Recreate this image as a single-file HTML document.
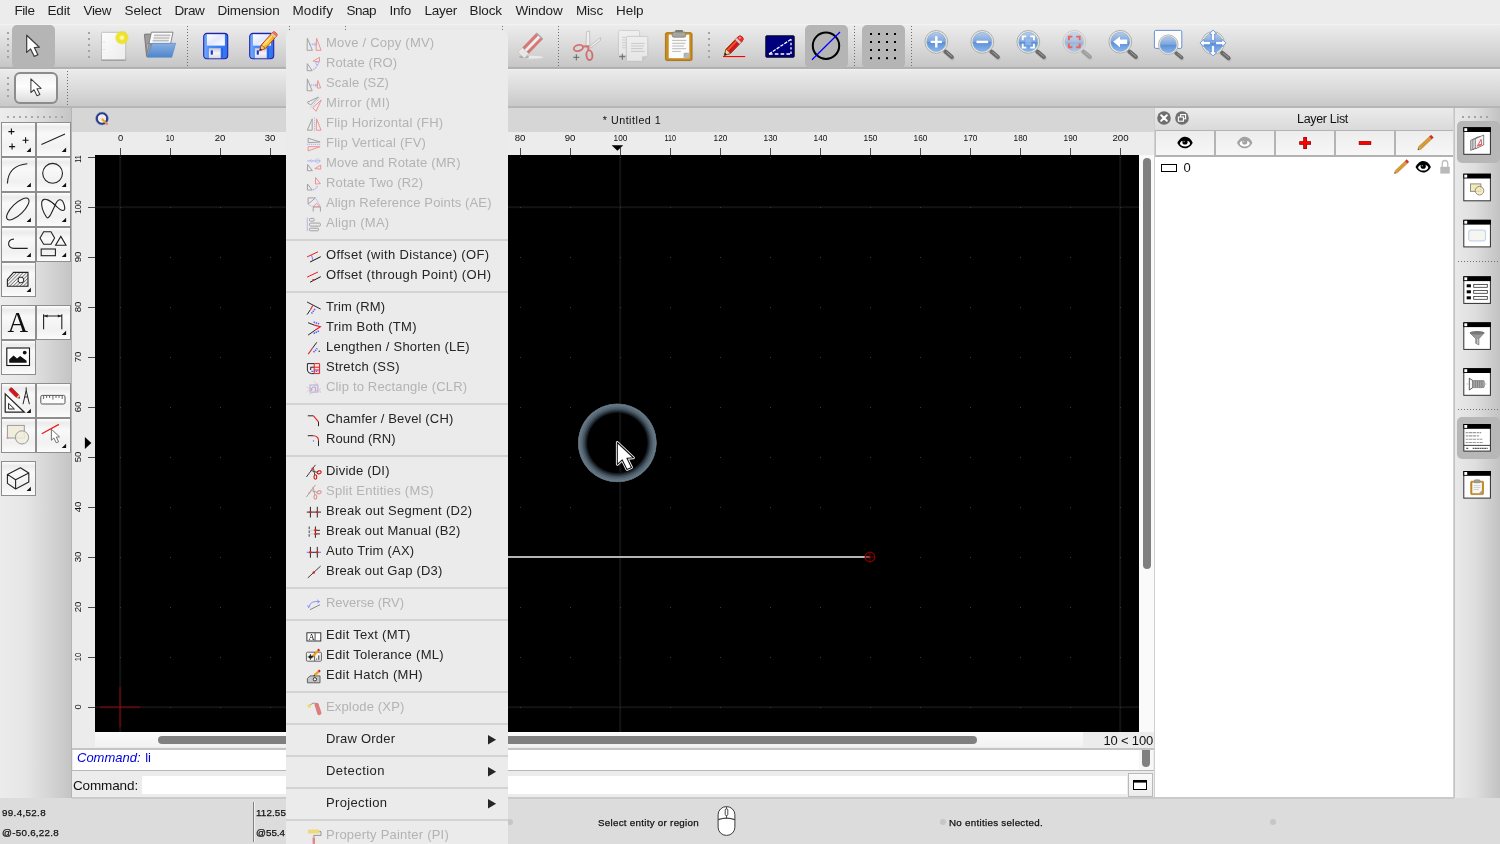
<!DOCTYPE html>
<html><head><meta charset="utf-8"><title>QCAD</title>
<style>
html,body{margin:0;padding:0}
body{width:1500px;height:844px;position:relative;overflow:hidden;background:#ececec;font-family:"Liberation Sans",sans-serif;}
#root{position:absolute;left:0;top:0;width:1500px;height:844px;overflow:hidden;will-change:transform}
.a{position:absolute;display:block}
.t{position:absolute;white-space:nowrap;font-family:"Liberation Sans",sans-serif}
</style></head><body><div id="root">
<div class="a" style="left:0px;top:0px;width:1500px;height:24px;background:#ececec"></div>
<div class="a" style="left:0px;top:24px;width:1500px;height:44.7px;background:linear-gradient(#f5f5f5 0,#ececec 1.5px,#dadada 22px,#c7c7c7 42.4px,#b1b1b1 43.4px,#b1b1b1 44.7px)"></div>
<div class="a" style="left:0px;top:68.7px;width:1500px;height:39.3px;background:linear-gradient(#f3f3f3 0,#ebebeb 1.5px,#dbdbdb 19px,#c9c9c9 36.6px,#b5b5b5 37.6px,#b5b5b5 39.3px)"></div>
<div class="t" style="left:14.50px;top:1.00px;font-size:13.5px;line-height:20px;letter-spacing:-0.438px;color:#1e1e1e;">File</div>
<div class="t" style="left:47.50px;top:1.00px;font-size:13.5px;line-height:20px;letter-spacing:-0.191px;color:#1e1e1e;">Edit</div>
<div class="t" style="left:83.50px;top:1.00px;font-size:13.5px;line-height:20px;letter-spacing:-0.380px;color:#1e1e1e;">View</div>
<div class="t" style="left:124.50px;top:1.00px;font-size:13.5px;line-height:20px;letter-spacing:-0.087px;color:#1e1e1e;">Select</div>
<div class="t" style="left:174.50px;top:1.00px;font-size:13.5px;line-height:20px;letter-spacing:-0.376px;color:#1e1e1e;">Draw</div>
<div class="t" style="left:217.50px;top:1.00px;font-size:13.5px;line-height:20px;letter-spacing:-0.198px;color:#1e1e1e;">Dimension</div>
<div class="t" style="left:292.50px;top:1.00px;font-size:13.5px;line-height:20px;letter-spacing:0.123px;color:#1e1e1e;">Modify</div>
<div class="t" style="left:346.50px;top:1.00px;font-size:13.5px;line-height:20px;letter-spacing:-0.507px;color:#1e1e1e;">Snap</div>
<div class="t" style="left:389.50px;top:1.00px;font-size:13.5px;line-height:20px;letter-spacing:-0.254px;color:#1e1e1e;">Info</div>
<div class="t" style="left:424.50px;top:1.00px;font-size:13.5px;line-height:20px;letter-spacing:-0.254px;color:#1e1e1e;">Layer</div>
<div class="t" style="left:469.50px;top:1.00px;font-size:13.5px;line-height:20px;letter-spacing:-0.103px;color:#1e1e1e;">Block</div>
<div class="t" style="left:515.50px;top:1.00px;font-size:13.5px;line-height:20px;letter-spacing:-0.169px;color:#1e1e1e;">Window</div>
<div class="t" style="left:576.00px;top:1.00px;font-size:13.5px;line-height:20px;letter-spacing:-0.186px;color:#1e1e1e;">Misc</div>
<div class="t" style="left:616.00px;top:1.00px;font-size:13.5px;line-height:20px;letter-spacing:-0.066px;color:#1e1e1e;">Help</div>
<div class="a" style="left:7px;top:32px;width:2px;height:2px;background:#a4a4a4"></div>
<div class="a" style="left:7px;top:38px;width:2px;height:2px;background:#a4a4a4"></div>
<div class="a" style="left:7px;top:44px;width:2px;height:2px;background:#a4a4a4"></div>
<div class="a" style="left:7px;top:50px;width:2px;height:2px;background:#a4a4a4"></div>
<div class="a" style="left:7px;top:56px;width:2px;height:2px;background:#a4a4a4"></div>
<div class="a" style="left:88px;top:32px;width:2px;height:2px;background:#a4a4a4"></div>
<div class="a" style="left:88px;top:38px;width:2px;height:2px;background:#a4a4a4"></div>
<div class="a" style="left:88px;top:44px;width:2px;height:2px;background:#a4a4a4"></div>
<div class="a" style="left:88px;top:50px;width:2px;height:2px;background:#a4a4a4"></div>
<div class="a" style="left:88px;top:56px;width:2px;height:2px;background:#a4a4a4"></div>
<div class="a" style="left:708px;top:32px;width:2px;height:2px;background:#a4a4a4"></div>
<div class="a" style="left:708px;top:38px;width:2px;height:2px;background:#a4a4a4"></div>
<div class="a" style="left:708px;top:44px;width:2px;height:2px;background:#a4a4a4"></div>
<div class="a" style="left:708px;top:50px;width:2px;height:2px;background:#a4a4a4"></div>
<div class="a" style="left:708px;top:56px;width:2px;height:2px;background:#a4a4a4"></div>
<div class="a" style="left:187.0px;top:26px;width:1px;height:40px;background:repeating-linear-gradient(#6e6e6e 0 1px,transparent 1px 3px)"></div>
<div class="a" style="left:289.0px;top:26px;width:1px;height:40px;background:repeating-linear-gradient(#6e6e6e 0 1px,transparent 1px 3px)"></div>
<div class="a" style="left:345.0px;top:26px;width:1px;height:40px;background:repeating-linear-gradient(#6e6e6e 0 1px,transparent 1px 3px)"></div>
<div class="a" style="left:502.0px;top:26px;width:1px;height:40px;background:repeating-linear-gradient(#6e6e6e 0 1px,transparent 1px 3px)"></div>
<div class="a" style="left:558.0px;top:26px;width:1px;height:40px;background:repeating-linear-gradient(#6e6e6e 0 1px,transparent 1px 3px)"></div>
<div class="a" style="left:854.0px;top:26px;width:1px;height:40px;background:repeating-linear-gradient(#6e6e6e 0 1px,transparent 1px 3px)"></div>
<div class="a" style="left:911.0px;top:26px;width:1px;height:40px;background:repeating-linear-gradient(#6e6e6e 0 1px,transparent 1px 3px)"></div>
<div class="a" style="left:7px;top:77px;width:2px;height:2px;background:#a4a4a4"></div>
<div class="a" style="left:7px;top:83px;width:2px;height:2px;background:#a4a4a4"></div>
<div class="a" style="left:7px;top:89px;width:2px;height:2px;background:#a4a4a4"></div>
<div class="a" style="left:7px;top:95px;width:2px;height:2px;background:#a4a4a4"></div>
<div class="a" style="left:67.0px;top:71px;width:1px;height:34px;background:repeating-linear-gradient(#6e6e6e 0 1px,transparent 1px 3px)"></div>
<div class="a" style="left:12px;top:25px;width:43px;height:43px;background:#b5b5b5;border-radius:5px"></div>
<div class="a" style="left:805px;top:25px;width:43px;height:43px;background:#b5b5b5;border-radius:5px"></div>
<div class="a" style="left:862px;top:25px;width:43px;height:43px;background:#b5b5b5;border-radius:5px"></div>
<div class="a" style="left:14px;top:72px;width:44px;height:32px;box-sizing:border-box;border:2px solid #8c8c8c;border-radius:6px;background:linear-gradient(#f2f2f2,#fdfdfd 45%,#f4f4f4 60%,#dcdcdc)"></div>
<svg class="a" style="left:0;top:0" width="1500" height="110" viewBox="0 0 1500 110"><defs>
<linearGradient id="lens" x1="0" y1="0" x2="0" y2="1"><stop offset="0" stop-color="#b4cbea"/><stop offset="0.48" stop-color="#7da6de"/><stop offset="0.52" stop-color="#5b8fd6"/><stop offset="1" stop-color="#86b6f2"/></linearGradient>
<linearGradient id="page" x1="0" y1="0" x2="1" y2="1"><stop offset="0" stop-color="#fdfdfd"/><stop offset="1" stop-color="#ececec"/></linearGradient>
<radialGradient id="glow"><stop offset="0" stop-color="#ffffff"/><stop offset="0.22" stop-color="#fbf58a"/><stop offset="0.45" stop-color="#efe41e"/><stop offset="0.8" stop-color="#ece02a" stop-opacity="0.85"/><stop offset="1" stop-color="#ece02a" stop-opacity="0"/></radialGradient>
<linearGradient id="flop" x1="0" y1="0" x2="1" y2="0"><stop offset="0" stop-color="#78aefc"/><stop offset="0.25" stop-color="#4a8cf8"/><stop offset="1" stop-color="#2f72f0"/></linearGradient>
<linearGradient id="lab" x1="0" y1="0" x2="1" y2="1"><stop offset="0" stop-color="#ffffff"/><stop offset="0.5" stop-color="#e4e8fc"/><stop offset="1" stop-color="#ffffff"/></linearGradient>
<linearGradient id="shut" x1="0" y1="0" x2="0" y2="1"><stop offset="0" stop-color="#c8c8d8"/><stop offset="0.5" stop-color="#f4f4f8"/><stop offset="1" stop-color="#d8d8e0"/></linearGradient>
<linearGradient id="fold" x1="0" y1="0" x2="0" y2="1"><stop offset="0" stop-color="#8ab0e0"/><stop offset="1" stop-color="#4f86cc"/></linearGradient>
<linearGradient id="pen" x1="0" y1="0" x2="1" y2="0"><stop offset="0" stop-color="#e8861a"/><stop offset="0.45" stop-color="#ffd040"/><stop offset="1" stop-color="#f08c10"/></linearGradient>
<g id="mag"><path d="M7.2 8.2L15.6 15.4" stroke="#a8a8a8" stroke-width="4.6" stroke-linecap="round" opacity="0.35" transform="translate(0.6,1.2)"/><path d="M9.2 9.8L15.5 15.1" stroke="#6a6a6a" stroke-width="4.2" stroke-linecap="round"/><path d="M10.4 10.2L15.6 14.6" stroke="#a2a2a2" stroke-width="0.9" stroke-linecap="round"/><circle cx="0" cy="0" r="11.4" fill="#ecece6" stroke="#a6a6a0" stroke-width="0.9"/><circle cx="0" cy="0" r="9.6" fill="url(#lens)" stroke="#8fa6c8" stroke-width="0.6"/></g>
<g id="floppy"><rect x="0.6" y="0.5" width="24" height="25.3" rx="3.2" fill="url(#flop)" stroke="#2222a6" stroke-width="1.1"/><rect x="3.8" y="1.4" width="18" height="11.3" fill="url(#lab)"/><rect x="5.8" y="15.3" width="11.8" height="10" fill="url(#shut)"/><rect x="7.6" y="17.4" width="2.2" height="4.4" rx="0.6" fill="#1a3cd0"/><rect x="18.3" y="15" width="1.6" height="10.4" fill="#1f5ae8" opacity="0.8"/></g>
<path id="arrowc" d="M0 0V17.2L3.9 13.7L7.6 21.2L11.2 19.6L7.6 12.4L12.7 12Z"/>
</defs><use href="#arrowc" x="26.7" y="35.2" fill="#fff" stroke="#3c3c3c" stroke-width="1.2" stroke-linejoin="round"/><g transform="translate(30.9,78.8) scale(0.8)"><use href="#arrowc" fill="#fff" stroke="#3c3c3c" stroke-width="1.3" stroke-linejoin="round"/></g><rect x="101" y="56" width="25.2" height="5" rx="1.6" fill="#7e7e7e" opacity="0.6"/><rect x="101.5" y="32.3" width="24.2" height="27.4" rx="1" fill="url(#page)" stroke="#b4b4b4" stroke-width="0.8"/><rect x="103.4" y="41.6" width="1.2" height="0.8" fill="#c4c4c4"/><rect x="103.4" y="49" width="1.2" height="0.8" fill="#c4c4c4"/><circle cx="121.9" cy="37.7" r="7.2" fill="url(#glow)"/><path d="M144.4 34.6Q144.4 34.1 145 34.1H151.6L151 56.4L146.6 56.4Z" fill="#9c9c9c" stroke="#6a6a6a" stroke-width="0.8"/><path d="M151.4 32.2H173L170.6 43.6H147.2L146.6 55Z" fill="#fcfcfc" stroke="#7c7c7c" stroke-width="0.9"/><path d="M154 35.4H170.4M153.4 38H169.6M152.6 40.6H168.8" stroke="#bcbcbc" stroke-width="1.7"/><path d="M152.2 43.3H175.6L171.8 57.2H147.2Z" fill="url(#fold)" stroke="#5a8acc" stroke-width="0.7"/><use href="#floppy" x="203.1" y="32.9"/><use href="#floppy" x="249.1" y="32.9"/><g transform="translate(259.7,50.7) rotate(-47.8)"><path d="M0 0L5.4 -2.7H22.4Q24.2 -2.7 24.2 0Q24.2 2.7 22.4 2.7H5.4Z" fill="url(#pen)" stroke="#b8400c" stroke-width="0.9" stroke-linejoin="round"/><path d="M5.4 -0.9H19.6" stroke="#fff2a0" stroke-width="1.2" opacity="0.9"/><path d="M0 0L5.4 -2.7V2.7Z" fill="#f2c890" stroke="#b8400c" stroke-width="0.7"/><path d="M0 0L2.2 -1.1V1.1Z" fill="#2a2a2a"/><rect x="19.8" y="-2.7" width="1.8" height="5.4" fill="#cfcfcf"/><path d="M21.6 -2.7H22.6Q24.2 -2.7 24.2 0Q24.2 2.7 22.6 2.7H21.6Z" fill="#e87860"/></g><g opacity="0.62"><ellipse cx="531" cy="57.3" rx="12.4" ry="1.5" fill="#fafafa"/><ellipse cx="524" cy="57" rx="5" ry="1.4" fill="#9a9a9a"/><g transform="translate(530.6,45.4) rotate(-46)"><rect x="-13.6" y="-4.5" width="27.2" height="9" rx="0.8" fill="#d23c3c"/><rect x="-13.6" y="-1.4" width="27.2" height="2.9" fill="#f8f8f8"/><rect x="-13.6" y="-4.5" width="6.2" height="9" fill="#f4f4f4" stroke="#bdbdbd" stroke-width="0.5"/><rect x="12.2" y="-4.5" width="1.4" height="9" fill="#8e8e8e"/></g></g><g opacity="0.62"><path d="M586.6 31.6L589.6 31L589.8 46.6L586 45.4Z" fill="#f8f8f8" stroke="#9a9a9a" stroke-width="0.7"/><path d="M590 46L600.6 37.6L600.4 40.6L590.4 48.2Z" fill="#f8f8f8" stroke="#9a9a9a" stroke-width="0.7"/><ellipse cx="578.4" cy="48" rx="4.7" ry="2.9" fill="none" stroke="#d03434" stroke-width="1.9" transform="rotate(-14 578.4 48)"/><ellipse cx="589.4" cy="55.2" rx="3" ry="4.8" fill="none" stroke="#d03434" stroke-width="1.9" transform="rotate(-6 589.4 55.2)"/><path d="M582.8 46.6L588.2 46.4L588.4 50.6" stroke="#d03434" stroke-width="2" fill="none"/><path d="M573.2 57.3H579.4M576.3 54.2V60.4" stroke="#222" stroke-width="1"/></g><g opacity="0.6"><rect x="618.4" y="30.4" width="21.2" height="25" rx="1.2" fill="#f4f4f4" stroke="#b4b4b4" stroke-width="0.8"/><path d="M622 37.4H626M622 40H626M622 42.6H626M622 45.2H626M622 47.8H626" stroke="#bdbdbd" stroke-width="0.9"/><path d="M627.4 36.4H646.8Q647.8 36.4 647.8 37.4V56.2L642 61.4H627.4Q626.4 61.4 626.4 60.4V37.4Q626.4 36.4 627.4 36.4Z" fill="#f7f7f7" stroke="#b0b0b0" stroke-width="0.8"/><path d="M647.8 56.2L642 61.4V57.2Q642 56.2 643 56.2Z" fill="#c4c4c4"/><path d="M631 43.4H644.6M631 46H644M631 48.6H642.6M631 51.4H644.6" stroke="#b8b8b8" stroke-width="0.9"/><path d="M619.2 56.7H625.4M622.3 53.6V59.8" stroke="#222" stroke-width="1"/></g><rect x="665.2" y="33" width="27.4" height="28.2" rx="1.8" fill="#8a8a8a" opacity="0.4"/><rect x="665.4" y="32.6" width="26.6" height="27.8" rx="1.6" fill="#c98a1e" stroke="#a56c10" stroke-width="0.8"/><rect x="668.7" y="34.6" width="20.6" height="23.6" fill="#fbfbfb"/><path d="M689.3 58.2H683.6L689.3 52.8Z" fill="#b4b4b4"/><path d="M683.6 58.2V54Q683.6 52.8 684.8 52.8H689.3Z" fill="#8e8e8e" opacity="0.7"/><path d="M672.2 40.4H686.2M672.2 43.3H685.4M672.2 46H684M672.2 48.7H686.2M672.2 51.4H680.8" stroke="#bababa" stroke-width="1"/><rect x="675.2" y="30" width="7.8" height="3.6" rx="0.8" fill="#7e7e76"/><rect x="672.2" y="32" width="13.6" height="5.2" rx="1.6" fill="#a6a69a" stroke="#76766c" stroke-width="0.7"/><rect x="723" y="56" width="22.2" height="1.1" fill="#ff0000"/><g transform="translate(724.3,55.4) rotate(-46)"><path d="M0 0L5.8 -3.1H22.6Q25.8 -3.1 25.8 0Q25.8 3.1 22.6 3.1H5.8Z" fill="#d81424" stroke="#7c4a12" stroke-width="0.9" stroke-linejoin="round"/><path d="M5.8 -1.2H18.6" stroke="#f0602a" stroke-width="1.5"/><path d="M0 0L5.8 -3.1V3.1Z" fill="#f4cfa4" stroke="#7c4a12" stroke-width="0.7"/><path d="M0 0L2.4 -1.25V1.25Z" fill="#161616"/><rect x="18.8" y="-3.1" width="2.6" height="6.2" fill="#cfcfcf"/><path d="M21.4 -3.1H22.6Q25.8 -3.1 25.8 0Q25.8 3.1 22.6 3.1H21.4Z" fill="#f02a2a"/><circle cx="23.4" cy="-1" r="1.1" fill="#ff8a8a"/></g><rect x="765.8" y="35.8" width="28.4" height="21.4" rx="0.8" fill="#00007e" stroke="#0a0a1e" stroke-width="1"/><path d="M769 54L791 39.3" stroke="#fff" stroke-width="1.3" stroke-dasharray="3.4 1.2"/><path d="M769 54H791" stroke="#fff" stroke-width="1.3" stroke-dasharray="3.6 2.2"/><path d="M791 54V39.3" stroke="#fff" stroke-width="1.3" stroke-dasharray="2.4 2"/><circle cx="826" cy="45.7" r="13.2" fill="none" stroke="#000" stroke-width="2"/><path d="M812 59.8L840 32" stroke="#0000ff" stroke-width="1.2"/><rect x="870" y="33" width="2" height="2" fill="#000"/><rect x="870" y="41" width="2" height="2" fill="#000"/><rect x="870" y="49" width="2" height="2" fill="#000"/><rect x="870" y="57.2" width="2" height="2" fill="#000"/><rect x="878" y="33" width="2" height="2" fill="#000"/><rect x="878" y="41" width="2" height="2" fill="#000"/><rect x="878" y="49" width="2" height="2" fill="#000"/><rect x="878" y="57.2" width="2" height="2" fill="#000"/><rect x="886" y="33" width="2" height="2" fill="#000"/><rect x="886" y="41" width="2" height="2" fill="#000"/><rect x="886" y="49" width="2" height="2" fill="#000"/><rect x="886" y="57.2" width="2" height="2" fill="#000"/><rect x="894" y="33" width="2" height="2" fill="#000"/><rect x="894" y="41" width="2" height="2" fill="#000"/><rect x="894" y="49" width="2" height="2" fill="#000"/><rect x="894" y="57.2" width="2" height="2" fill="#000"/><use href="#mag" x="936.3" y="41.9"/><path d="M930.7 41.9H941.9M936.3 36.3V47.5" stroke="#fff" stroke-width="2.4"/><use href="#mag" x="982.3" y="41.9"/><path d="M976.5 41.9H988.1" stroke="#fff" stroke-width="2.4"/><use href="#mag" x="1028.3" y="41.9"/><path d="M1022.7 40.2V36.4H1026.3M1030.3 36.4H1033.9V40.2M1033.9 43.8V47.6H1030.3M1026.3 47.6H1022.7V43.8" fill="none" stroke="#fff" stroke-width="1.9"/><rect x="1025.3" y="39" width="6" height="6" fill="#9dbcec" opacity="0.7"/><g opacity="0.5"><use href="#mag" x="1074.3" y="41.8"/></g><path d="M1068.9 40.2V36.6H1072.4M1076.2 36.6H1079.7V40.2M1079.7 43.6V47.2H1076.2M1072.4 47.2H1068.9V43.6" fill="none" stroke="#ea6262" stroke-width="1.9"/><use href="#mag" x="1120.3" y="41.8"/><path d="M1113.2 41.8L1120 36.4V39.6H1127.2V44H1120V47.2Z" fill="#fff"/><rect x="1154.4" y="30.4" width="27.4" height="18" rx="1.4" fill="#fdfdfd" stroke="#5b84cc" stroke-width="0.9"/><g transform="translate(1168.3,44.7) scale(0.86)"><use href="#mag"/></g><g transform="translate(1213,43)"><use href="#mag"/><g transform="rotate(0)"><path d="M-1.65 -2.6V-9H-3.6L0 -13.1L3.6 -9H1.65V-2.6Z" fill="#fff" stroke="#4a80d4" stroke-width="0.7" stroke-linejoin="round"/></g><g transform="rotate(90)"><path d="M-1.65 -2.6V-9H-3.6L0 -13.1L3.6 -9H1.65V-2.6Z" fill="#fff" stroke="#4a80d4" stroke-width="0.7" stroke-linejoin="round"/></g><g transform="rotate(180)"><path d="M-1.65 -2.6V-9H-3.6L0 -13.1L3.6 -9H1.65V-2.6Z" fill="#fff" stroke="#4a80d4" stroke-width="0.7" stroke-linejoin="round"/></g><g transform="rotate(270)"><path d="M-1.65 -2.6V-9H-3.6L0 -13.1L3.6 -9H1.65V-2.6Z" fill="#fff" stroke="#4a80d4" stroke-width="0.7" stroke-linejoin="round"/></g></g></svg>
<div class="a" style="left:0px;top:108px;width:72px;height:690px;background:linear-gradient(90deg,#ececec,#e6e6e6 35%,#c4c4c4)"></div>
<div class="a" style="left:71px;top:108px;width:1px;height:690px;background:#b4b4b4"></div>
<div class="a" style="left:7px;top:116px;width:2px;height:2px;background:#a8a8a8"></div>
<div class="a" style="left:13px;top:116px;width:2px;height:2px;background:#a8a8a8"></div>
<div class="a" style="left:19px;top:116px;width:2px;height:2px;background:#a8a8a8"></div>
<div class="a" style="left:25px;top:116px;width:2px;height:2px;background:#a8a8a8"></div>
<div class="a" style="left:31px;top:116px;width:2px;height:2px;background:#a8a8a8"></div>
<div class="a" style="left:37px;top:116px;width:2px;height:2px;background:#a8a8a8"></div>
<div class="a" style="left:43px;top:116px;width:2px;height:2px;background:#a8a8a8"></div>
<div class="a" style="left:49px;top:116px;width:2px;height:2px;background:#a8a8a8"></div>
<div class="a" style="left:55px;top:116px;width:2px;height:2px;background:#a8a8a8"></div>
<div class="a" style="left:61px;top:116px;width:2px;height:2px;background:#a8a8a8"></div>
<div class="a" style="left:1px;top:122px;width:35px;height:35px;box-sizing:border-box;border:1px solid #8e8e8e;background:linear-gradient(#fdfdfd 0,#ebebeb 12%,#f9f9f9 32%,#f1f1f1 72%,#fbfbfb 100%)"></div>
<div class="a" style="left:36px;top:122px;width:35px;height:35px;box-sizing:border-box;border:1px solid #8e8e8e;background:linear-gradient(#fdfdfd 0,#ebebeb 12%,#f9f9f9 32%,#f1f1f1 72%,#fbfbfb 100%)"></div>
<div class="a" style="left:1px;top:157px;width:35px;height:35px;box-sizing:border-box;border:1px solid #8e8e8e;background:linear-gradient(#fdfdfd 0,#ebebeb 12%,#f9f9f9 32%,#f1f1f1 72%,#fbfbfb 100%)"></div>
<div class="a" style="left:36px;top:157px;width:35px;height:35px;box-sizing:border-box;border:1px solid #8e8e8e;background:linear-gradient(#fdfdfd 0,#ebebeb 12%,#f9f9f9 32%,#f1f1f1 72%,#fbfbfb 100%)"></div>
<div class="a" style="left:1px;top:192px;width:35px;height:35px;box-sizing:border-box;border:1px solid #8e8e8e;background:linear-gradient(#fdfdfd 0,#ebebeb 12%,#f9f9f9 32%,#f1f1f1 72%,#fbfbfb 100%)"></div>
<div class="a" style="left:36px;top:192px;width:35px;height:35px;box-sizing:border-box;border:1px solid #8e8e8e;background:linear-gradient(#fdfdfd 0,#ebebeb 12%,#f9f9f9 32%,#f1f1f1 72%,#fbfbfb 100%)"></div>
<div class="a" style="left:1px;top:227px;width:35px;height:35px;box-sizing:border-box;border:1px solid #8e8e8e;background:linear-gradient(#fdfdfd 0,#ebebeb 12%,#f9f9f9 32%,#f1f1f1 72%,#fbfbfb 100%)"></div>
<div class="a" style="left:36px;top:227px;width:35px;height:35px;box-sizing:border-box;border:1px solid #8e8e8e;background:linear-gradient(#fdfdfd 0,#ebebeb 12%,#f9f9f9 32%,#f1f1f1 72%,#fbfbfb 100%)"></div>
<div class="a" style="left:1px;top:262px;width:35px;height:35px;box-sizing:border-box;border:1px solid #8e8e8e;background:linear-gradient(#fdfdfd 0,#ebebeb 12%,#f9f9f9 32%,#f1f1f1 72%,#fbfbfb 100%)"></div>
<div class="a" style="left:1px;top:305px;width:35px;height:35px;box-sizing:border-box;border:1px solid #8e8e8e;background:linear-gradient(#fdfdfd 0,#ebebeb 12%,#f9f9f9 32%,#f1f1f1 72%,#fbfbfb 100%)"></div>
<div class="a" style="left:36px;top:305px;width:35px;height:35px;box-sizing:border-box;border:1px solid #8e8e8e;background:linear-gradient(#fdfdfd 0,#ebebeb 12%,#f9f9f9 32%,#f1f1f1 72%,#fbfbfb 100%)"></div>
<div class="a" style="left:1px;top:340px;width:35px;height:35px;box-sizing:border-box;border:1px solid #8e8e8e;background:linear-gradient(#fdfdfd 0,#ebebeb 12%,#f9f9f9 32%,#f1f1f1 72%,#fbfbfb 100%)"></div>
<div class="a" style="left:1px;top:383px;width:35px;height:35px;box-sizing:border-box;border:1px solid #8e8e8e;background:linear-gradient(#fdfdfd 0,#ebebeb 12%,#f9f9f9 32%,#f1f1f1 72%,#fbfbfb 100%)"></div>
<div class="a" style="left:36px;top:383px;width:35px;height:35px;box-sizing:border-box;border:1px solid #8e8e8e;background:linear-gradient(#fdfdfd 0,#ebebeb 12%,#f9f9f9 32%,#f1f1f1 72%,#fbfbfb 100%)"></div>
<div class="a" style="left:1px;top:418px;width:35px;height:35px;box-sizing:border-box;border:1px solid #8e8e8e;background:linear-gradient(#fdfdfd 0,#ebebeb 12%,#f9f9f9 32%,#f1f1f1 72%,#fbfbfb 100%)"></div>
<div class="a" style="left:36px;top:418px;width:35px;height:35px;box-sizing:border-box;border:1px solid #8e8e8e;background:linear-gradient(#fdfdfd 0,#ebebeb 12%,#f9f9f9 32%,#f1f1f1 72%,#fbfbfb 100%)"></div>
<div class="a" style="left:1px;top:461px;width:35px;height:35px;box-sizing:border-box;border:1px solid #8e8e8e;background:linear-gradient(#fdfdfd 0,#ebebeb 12%,#f9f9f9 32%,#f1f1f1 72%,#fbfbfb 100%)"></div>
<svg class="a" style="left:0;top:108px" width="72" height="400" viewBox="0 108 72 400"><defs><pattern id="hat" width="2.4" height="2.4" patternUnits="userSpaceOnUse" patternTransform="rotate(-45)"><rect width="2.4" height="2.4" fill="#f2f2f2"/><rect width="2.4" height="0.7" fill="#666"/></pattern></defs><path d="M8.4 131.6H14.4M11.4 128.6V134.6" stroke="#111" stroke-width="1.1" fill="none"/><path d="M22.6 140.3H28.6M25.6 137.3V143.3" stroke="#111" stroke-width="1.1" fill="none"/><path d="M9.1 146.6H15.1M12.1 143.6V149.6" stroke="#111" stroke-width="1.1" fill="none"/><path d="M30.9 147.49999999999997V151.89999999999998H26.5Z" fill="#111"/><path d="M41.5 144.5L65 134.1" stroke="#222" stroke-width="1.1"/><path d="M66.10000000000001 147.49999999999997V151.89999999999998H61.70000000000001Z" fill="#111"/><path d="M7.4 183.4Q8.2 165.4 27.3 163.7" fill="none" stroke="#222" stroke-width="1.1"/><path d="M30.9 182.7V187.1H26.5Z" fill="#111"/><circle cx="52.6" cy="173.3" r="9.9" fill="none" stroke="#222" stroke-width="1.1"/><path d="M66.10000000000001 182.7V187.1H61.70000000000001Z" fill="#111"/><ellipse cx="17.8" cy="209" rx="14.6" ry="5.6" fill="none" stroke="#222" stroke-width="1.1" transform="rotate(-44 17.8 209)"/><path d="M30.9 217.7V222.1H26.5Z" fill="#111"/><path d="M41.8 201.6C44 196.4 50.6 200.6 56.4 206.4C62 211.8 66 212 64.4 205.6C62.6 198.6 58.6 197.4 55.4 204.4C52 211.8 48.8 220.6 46.4 217C43.8 213 41 206.4 41.8 201.6Z" fill="none" stroke="#222" stroke-width="1.1"/><path d="M66.10000000000001 217.7V222.1H61.70000000000001Z" fill="#111"/><path d="M13.9 239.1C6.8 238.9 6.8 248.5 13.9 248.4H27.7" fill="none" stroke="#222" stroke-width="1.1"/><path d="M30.9 252.69999999999996V257.09999999999997H26.5Z" fill="#111"/><path d="M40 238L43.65 231.7H50.95L54.6 238L50.95 244.3H43.65Z" fill="none" stroke="#222" stroke-width="1.1"/><path d="M60.8 236.4L66 245.2H55.6Z" fill="none" stroke="#222" stroke-width="1.1"/><rect x="41.2" y="249" width="14.2" height="6.7" fill="none" stroke="#222" stroke-width="1.1"/><path d="M66.10000000000001 252.69999999999996V257.09999999999997H61.70000000000001Z" fill="#111"/><path d="M7.4 286.2V279.5L13.5 272.4H28V286.2Z" fill="url(#hat)" stroke="#222" stroke-width="1.1"/><circle cx="20.9" cy="280" r="2.9" fill="#f6f6f6" stroke="#222" stroke-width="1"/><path d="M30.9 287.7V292.09999999999997H26.5Z" fill="#111"/><text x="17.9" y="332.3" text-anchor="middle" font-family="Liberation Serif,serif" font-size="28.5" fill="#111">A</text><path d="M43.6 314.3V329.2M61.8 314.3V329.2M43.6 316H61.8" stroke="#222" stroke-width="1.1" fill="none"/><path d="M43.9 316L47.6 314.6V317.4ZM61.5 316L57.8 314.6V317.4Z" fill="#222"/><path d="M66.10000000000001 330.7V335.09999999999997H61.70000000000001Z" fill="#111"/><rect x="6.8" y="348" width="22.7" height="17.5" fill="#fff" stroke="#111" stroke-width="1.1"/><path d="M9.2 362.8V359.6L13.6 355.4L17 358.6L20.2 356L26.6 360.8V362.8Z" fill="#111"/><circle cx="24.7" cy="352.6" r="1.9" fill="#111"/><path d="M5.2 393.9V412.2H24.3Z" fill="#fafafa" stroke="#222" stroke-width="1.2"/><path d="M8.6 403.4V409H14.4Z" fill="none" stroke="#222" stroke-width="1"/><g transform="translate(19.6,398.2) rotate(-135)"><path d="M0 0L3 -1.9H12.4Q13.8 -1.9 13.8 0Q13.8 1.9 12.4 1.9H3Z" fill="#d81424" stroke="#7c3a12" stroke-width="0.6"/><path d="M0 0L3 -1.9V1.9Z" fill="#f0c8a0"/><path d="M0 0L1.2 -0.8V0.8Z" fill="#111"/></g><path d="M26.2 387.4V390.4M26.2 390.4L23 404.2M26.2 390.4L29.4 404.2M24.6 397H27.8" stroke="#222" stroke-width="1" fill="none"/><path d="M30.9 408.7V413.09999999999997H26.5Z" fill="#111"/><rect x="40.8" y="395.4" width="24.2" height="8.6" rx="1.4" fill="#fbfbfb" stroke="#555" stroke-width="1"/><path d="M43.6 396V399M46.6 396V398M49.6 396V398M52.9 396V399.6M56 396V398M59 396V398M62.2 396V399" stroke="#444" stroke-width="0.8"/><rect x="7.4" y="425.4" width="16.9" height="12.6" fill="#f0eddc" stroke="#9a9a9a" stroke-width="1"/><circle cx="22" cy="437.4" r="6.6" fill="#f0eddc" fill-opacity="0.85" stroke="#9a9a9a" stroke-width="1"/><circle cx="7.6" cy="438" r="1.1" fill="#f08a8a"/><path d="M41.8 433.8L58.9 424.4" stroke="#f01818" stroke-width="1.2"/><g transform="translate(51.4,429.2) scale(0.64)"><path d="M0 0V17.2L3.9 13.7L7.6 21.2L11.2 19.6L7.6 12.4L12.7 12Z" fill="#fff" stroke="#555" stroke-width="1.3" stroke-linejoin="round"/></g><path d="M66.10000000000001 443.7V448.09999999999997H61.70000000000001Z" fill="#111"/><path d="M7.4 474.4L20.4 467.7L28.8 473L15.6 479.8ZM7.4 474.4V483.4L15.6 489V479.8M15.6 489L28.8 482V473" fill="none" stroke="#222" stroke-width="1.1" stroke-linejoin="round"/><path d="M30.9 486.7V491.09999999999997H26.5Z" fill="#111"/></svg>
<div class="a" style="left:72px;top:108px;width:1082px;height:24px;background:#d6d6d6"></div>
<div class="t" style="left:602.80px;top:110.20px;font-size:10.7px;line-height:20px;letter-spacing:0.513px;color:#111;">* Untitled 1</div>
<svg class="a" style="left:94px;top:111px;" width="16" height="16" viewBox="0 0 16 16"><circle cx="8" cy="7.5" r="5.3" fill="#f4f4f4" stroke="#2a3c88" stroke-width="2.2"/><circle cx="8" cy="7.5" r="6.5" fill="none" stroke="#8a9ac8" stroke-width="0.5"/><path d="M4 7.8H12M8 3.8V11.8" stroke="#e8b0b0" stroke-width="0.5"/><path d="M7.6 7.6L12.6 12.6" stroke="#f0a020" stroke-width="2"/><path d="M12.2 12.2L13.6 13.6" stroke="#e87878" stroke-width="2"/><path d="M7.2 7.2L8.2 8.2" stroke="#fff0a0" stroke-width="1.4"/></svg>
<div class="a" style="left:72px;top:132px;width:1082px;height:23px;background:#ececec"></div>
<div class="a" style="left:72px;top:155px;width:23px;height:577px;background:#ececec"></div>
<div class="a" style="left:95px;top:155px;width:1044px;height:577px;background:#000"></div>
<div class="a" style="left:119.9px;top:148px;width:1.2px;height:7px;background:#4a4a4a"></div>
<div class="t" style="left:117.90px;top:128.00px;width:5.01px;font-size:9px;line-height:20px;color:#111;transform:scaleX(1.039);transform-origin:50% 50%">0</div>
<div class="a" style="left:169.9px;top:148px;width:1.2px;height:7px;background:#4a4a4a"></div>
<div class="t" style="left:165.39px;top:128.00px;width:10.01px;font-size:9px;line-height:20px;color:#111;transform:scaleX(0.829);transform-origin:50% 50%">10</div>
<div class="a" style="left:219.9px;top:148px;width:1.2px;height:7px;background:#4a4a4a"></div>
<div class="t" style="left:215.39px;top:128.00px;width:10.01px;font-size:9px;line-height:20px;color:#111;transform:scaleX(1.069);transform-origin:50% 50%">20</div>
<div class="a" style="left:269.9px;top:148px;width:1.2px;height:7px;background:#4a4a4a"></div>
<div class="t" style="left:265.39px;top:128.00px;width:10.01px;font-size:9px;line-height:20px;color:#111;transform:scaleX(1.069);transform-origin:50% 50%">30</div>
<div class="a" style="left:319.9px;top:148px;width:1.2px;height:7px;background:#4a4a4a"></div>
<div class="t" style="left:315.39px;top:128.00px;width:10.01px;font-size:9px;line-height:20px;color:#111;transform:scaleX(1.069);transform-origin:50% 50%">40</div>
<div class="a" style="left:369.9px;top:148px;width:1.2px;height:7px;background:#4a4a4a"></div>
<div class="t" style="left:365.39px;top:128.00px;width:10.01px;font-size:9px;line-height:20px;color:#111;transform:scaleX(1.069);transform-origin:50% 50%">50</div>
<div class="a" style="left:419.9px;top:148px;width:1.2px;height:7px;background:#4a4a4a"></div>
<div class="t" style="left:415.39px;top:128.00px;width:10.01px;font-size:9px;line-height:20px;color:#111;transform:scaleX(1.069);transform-origin:50% 50%">60</div>
<div class="a" style="left:469.9px;top:148px;width:1.2px;height:7px;background:#4a4a4a"></div>
<div class="t" style="left:465.39px;top:128.00px;width:10.01px;font-size:9px;line-height:20px;color:#111;transform:scaleX(1.069);transform-origin:50% 50%">70</div>
<div class="a" style="left:519.9px;top:148px;width:1.2px;height:7px;background:#4a4a4a"></div>
<div class="t" style="left:515.39px;top:128.00px;width:10.01px;font-size:9px;line-height:20px;color:#111;transform:scaleX(1.069);transform-origin:50% 50%">80</div>
<div class="a" style="left:569.9px;top:148px;width:1.2px;height:7px;background:#4a4a4a"></div>
<div class="t" style="left:565.39px;top:128.00px;width:10.01px;font-size:9px;line-height:20px;color:#111;transform:scaleX(1.069);transform-origin:50% 50%">90</div>
<div class="a" style="left:619.9px;top:148px;width:1.2px;height:7px;background:#4a4a4a"></div>
<div class="t" style="left:612.89px;top:128.00px;width:15.02px;font-size:9px;line-height:20px;color:#111;transform:scaleX(0.919);transform-origin:50% 50%">100</div>
<div class="a" style="left:669.9px;top:148px;width:1.2px;height:7px;background:#4a4a4a"></div>
<div class="t" style="left:663.23px;top:128.00px;width:14.35px;font-size:9px;line-height:20px;color:#111;transform:scaleX(0.794);transform-origin:50% 50%">110</div>
<div class="a" style="left:719.9px;top:148px;width:1.2px;height:7px;background:#4a4a4a"></div>
<div class="t" style="left:712.89px;top:128.00px;width:15.02px;font-size:9px;line-height:20px;color:#111;transform:scaleX(0.919);transform-origin:50% 50%">120</div>
<div class="a" style="left:769.9px;top:148px;width:1.2px;height:7px;background:#4a4a4a"></div>
<div class="t" style="left:762.89px;top:128.00px;width:15.02px;font-size:9px;line-height:20px;color:#111;transform:scaleX(0.919);transform-origin:50% 50%">130</div>
<div class="a" style="left:819.9px;top:148px;width:1.2px;height:7px;background:#4a4a4a"></div>
<div class="t" style="left:812.89px;top:128.00px;width:15.02px;font-size:9px;line-height:20px;color:#111;transform:scaleX(0.919);transform-origin:50% 50%">140</div>
<div class="a" style="left:869.9px;top:148px;width:1.2px;height:7px;background:#4a4a4a"></div>
<div class="t" style="left:862.89px;top:128.00px;width:15.02px;font-size:9px;line-height:20px;color:#111;transform:scaleX(0.919);transform-origin:50% 50%">150</div>
<div class="a" style="left:919.9px;top:148px;width:1.2px;height:7px;background:#4a4a4a"></div>
<div class="t" style="left:912.89px;top:128.00px;width:15.02px;font-size:9px;line-height:20px;color:#111;transform:scaleX(0.919);transform-origin:50% 50%">160</div>
<div class="a" style="left:969.9px;top:148px;width:1.2px;height:7px;background:#4a4a4a"></div>
<div class="t" style="left:962.89px;top:128.00px;width:15.02px;font-size:9px;line-height:20px;color:#111;transform:scaleX(0.919);transform-origin:50% 50%">170</div>
<div class="a" style="left:1019.9px;top:148px;width:1.2px;height:7px;background:#4a4a4a"></div>
<div class="t" style="left:1012.89px;top:128.00px;width:15.02px;font-size:9px;line-height:20px;color:#111;transform:scaleX(0.919);transform-origin:50% 50%">180</div>
<div class="a" style="left:1069.9px;top:148px;width:1.2px;height:7px;background:#4a4a4a"></div>
<div class="t" style="left:1062.89px;top:128.00px;width:15.02px;font-size:9px;line-height:20px;color:#111;transform:scaleX(0.919);transform-origin:50% 50%">190</div>
<div class="a" style="left:1119.9px;top:148px;width:1.2px;height:7px;background:#4a4a4a"></div>
<div class="t" style="left:1112.89px;top:128.00px;width:15.02px;font-size:9px;line-height:20px;color:#111;transform:scaleX(1.079);transform-origin:50% 50%">200</div>
<div class="a" style="left:88px;top:706.9px;width:7px;height:1.2px;background:#4a4a4a"></div>
<div class="t" style="left:75.40px;top:697.40px;width:5.01px;font-size:9px;line-height:20px;color:#111;transform:rotate(-90deg) scaleX(1.039);transform-origin:50% 50%">0</div>
<div class="a" style="left:88px;top:656.9px;width:7px;height:1.2px;background:#4a4a4a"></div>
<div class="t" style="left:72.89px;top:647.40px;width:10.01px;font-size:9px;line-height:20px;color:#111;transform:rotate(-90deg) scaleX(0.829);transform-origin:50% 50%">10</div>
<div class="a" style="left:88px;top:606.9px;width:7px;height:1.2px;background:#4a4a4a"></div>
<div class="t" style="left:72.89px;top:597.40px;width:10.01px;font-size:9px;line-height:20px;color:#111;transform:rotate(-90deg) scaleX(1.069);transform-origin:50% 50%">20</div>
<div class="a" style="left:88px;top:556.9px;width:7px;height:1.2px;background:#4a4a4a"></div>
<div class="t" style="left:72.89px;top:547.40px;width:10.01px;font-size:9px;line-height:20px;color:#111;transform:rotate(-90deg) scaleX(1.069);transform-origin:50% 50%">30</div>
<div class="a" style="left:88px;top:506.9px;width:7px;height:1.2px;background:#4a4a4a"></div>
<div class="t" style="left:72.89px;top:497.40px;width:10.01px;font-size:9px;line-height:20px;color:#111;transform:rotate(-90deg) scaleX(1.069);transform-origin:50% 50%">40</div>
<div class="a" style="left:88px;top:456.9px;width:7px;height:1.2px;background:#4a4a4a"></div>
<div class="t" style="left:72.89px;top:447.40px;width:10.01px;font-size:9px;line-height:20px;color:#111;transform:rotate(-90deg) scaleX(1.069);transform-origin:50% 50%">50</div>
<div class="a" style="left:88px;top:406.9px;width:7px;height:1.2px;background:#4a4a4a"></div>
<div class="t" style="left:72.89px;top:397.40px;width:10.01px;font-size:9px;line-height:20px;color:#111;transform:rotate(-90deg) scaleX(1.069);transform-origin:50% 50%">60</div>
<div class="a" style="left:88px;top:356.9px;width:7px;height:1.2px;background:#4a4a4a"></div>
<div class="t" style="left:72.89px;top:347.40px;width:10.01px;font-size:9px;line-height:20px;color:#111;transform:rotate(-90deg) scaleX(1.069);transform-origin:50% 50%">70</div>
<div class="a" style="left:88px;top:306.9px;width:7px;height:1.2px;background:#4a4a4a"></div>
<div class="t" style="left:72.89px;top:297.40px;width:10.01px;font-size:9px;line-height:20px;color:#111;transform:rotate(-90deg) scaleX(1.069);transform-origin:50% 50%">80</div>
<div class="a" style="left:88px;top:256.9px;width:7px;height:1.2px;background:#4a4a4a"></div>
<div class="t" style="left:72.89px;top:247.40px;width:10.01px;font-size:9px;line-height:20px;color:#111;transform:rotate(-90deg) scaleX(1.069);transform-origin:50% 50%">90</div>
<div class="a" style="left:88px;top:206.9px;width:7px;height:1.2px;background:#4a4a4a"></div>
<div class="t" style="left:70.39px;top:197.40px;width:15.02px;font-size:9px;line-height:20px;color:#111;transform:rotate(-90deg) scaleX(0.919);transform-origin:50% 50%">100</div>
<div class="a" style="left:88px;top:156.9px;width:7px;height:1.2px;background:#4a4a4a"></div>
<div class="a" style="left:72px;top:155px;width:16px;height:12px;overflow:hidden"><div class="t" style="left:-1.27px;top:-7.60px;width:14.35px;font-size:9px;line-height:20px;color:#111;transform:rotate(-90deg) scaleX(0.794);transform-origin:50% 50%">110</div></div>
<svg class="a" style="left:95px;top:155px;" width="1044" height="577" viewBox="0 0 1044 577"><rect x="24.2" y="0" width="2" height="577" fill="#131313"/><rect x="524.2" y="0" width="2" height="577" fill="#131313"/><rect x="1024.2" y="0" width="2" height="577" fill="#131313"/><rect x="0" y="51.2" width="1044" height="2" fill="#131313"/><rect x="0" y="551.2" width="1044" height="2" fill="#131313"/><rect x="25" y="552" width="1" height="1" fill="#3a3a3a"/><rect x="25" y="502" width="1" height="1" fill="#3a3a3a"/><rect x="25" y="452" width="1" height="1" fill="#3a3a3a"/><rect x="25" y="402" width="1" height="1" fill="#3a3a3a"/><rect x="25" y="352" width="1" height="1" fill="#3a3a3a"/><rect x="25" y="302" width="1" height="1" fill="#3a3a3a"/><rect x="25" y="252" width="1" height="1" fill="#3a3a3a"/><rect x="25" y="202" width="1" height="1" fill="#3a3a3a"/><rect x="25" y="152" width="1" height="1" fill="#3a3a3a"/><rect x="25" y="102" width="1" height="1" fill="#3a3a3a"/><rect x="25" y="52" width="1" height="1" fill="#3a3a3a"/><rect x="25" y="2" width="1" height="1" fill="#3a3a3a"/><rect x="75" y="552" width="1" height="1" fill="#3a3a3a"/><rect x="75" y="502" width="1" height="1" fill="#3a3a3a"/><rect x="75" y="452" width="1" height="1" fill="#3a3a3a"/><rect x="75" y="402" width="1" height="1" fill="#3a3a3a"/><rect x="75" y="352" width="1" height="1" fill="#3a3a3a"/><rect x="75" y="302" width="1" height="1" fill="#3a3a3a"/><rect x="75" y="252" width="1" height="1" fill="#3a3a3a"/><rect x="75" y="202" width="1" height="1" fill="#3a3a3a"/><rect x="75" y="152" width="1" height="1" fill="#3a3a3a"/><rect x="75" y="102" width="1" height="1" fill="#3a3a3a"/><rect x="75" y="52" width="1" height="1" fill="#3a3a3a"/><rect x="75" y="2" width="1" height="1" fill="#3a3a3a"/><rect x="125" y="552" width="1" height="1" fill="#3a3a3a"/><rect x="125" y="502" width="1" height="1" fill="#3a3a3a"/><rect x="125" y="452" width="1" height="1" fill="#3a3a3a"/><rect x="125" y="402" width="1" height="1" fill="#3a3a3a"/><rect x="125" y="352" width="1" height="1" fill="#3a3a3a"/><rect x="125" y="302" width="1" height="1" fill="#3a3a3a"/><rect x="125" y="252" width="1" height="1" fill="#3a3a3a"/><rect x="125" y="202" width="1" height="1" fill="#3a3a3a"/><rect x="125" y="152" width="1" height="1" fill="#3a3a3a"/><rect x="125" y="102" width="1" height="1" fill="#3a3a3a"/><rect x="125" y="52" width="1" height="1" fill="#3a3a3a"/><rect x="125" y="2" width="1" height="1" fill="#3a3a3a"/><rect x="175" y="552" width="1" height="1" fill="#3a3a3a"/><rect x="175" y="502" width="1" height="1" fill="#3a3a3a"/><rect x="175" y="452" width="1" height="1" fill="#3a3a3a"/><rect x="175" y="402" width="1" height="1" fill="#3a3a3a"/><rect x="175" y="352" width="1" height="1" fill="#3a3a3a"/><rect x="175" y="302" width="1" height="1" fill="#3a3a3a"/><rect x="175" y="252" width="1" height="1" fill="#3a3a3a"/><rect x="175" y="202" width="1" height="1" fill="#3a3a3a"/><rect x="175" y="152" width="1" height="1" fill="#3a3a3a"/><rect x="175" y="102" width="1" height="1" fill="#3a3a3a"/><rect x="175" y="52" width="1" height="1" fill="#3a3a3a"/><rect x="175" y="2" width="1" height="1" fill="#3a3a3a"/><rect x="225" y="552" width="1" height="1" fill="#3a3a3a"/><rect x="225" y="502" width="1" height="1" fill="#3a3a3a"/><rect x="225" y="452" width="1" height="1" fill="#3a3a3a"/><rect x="225" y="402" width="1" height="1" fill="#3a3a3a"/><rect x="225" y="352" width="1" height="1" fill="#3a3a3a"/><rect x="225" y="302" width="1" height="1" fill="#3a3a3a"/><rect x="225" y="252" width="1" height="1" fill="#3a3a3a"/><rect x="225" y="202" width="1" height="1" fill="#3a3a3a"/><rect x="225" y="152" width="1" height="1" fill="#3a3a3a"/><rect x="225" y="102" width="1" height="1" fill="#3a3a3a"/><rect x="225" y="52" width="1" height="1" fill="#3a3a3a"/><rect x="225" y="2" width="1" height="1" fill="#3a3a3a"/><rect x="275" y="552" width="1" height="1" fill="#3a3a3a"/><rect x="275" y="502" width="1" height="1" fill="#3a3a3a"/><rect x="275" y="452" width="1" height="1" fill="#3a3a3a"/><rect x="275" y="402" width="1" height="1" fill="#3a3a3a"/><rect x="275" y="352" width="1" height="1" fill="#3a3a3a"/><rect x="275" y="302" width="1" height="1" fill="#3a3a3a"/><rect x="275" y="252" width="1" height="1" fill="#3a3a3a"/><rect x="275" y="202" width="1" height="1" fill="#3a3a3a"/><rect x="275" y="152" width="1" height="1" fill="#3a3a3a"/><rect x="275" y="102" width="1" height="1" fill="#3a3a3a"/><rect x="275" y="52" width="1" height="1" fill="#3a3a3a"/><rect x="275" y="2" width="1" height="1" fill="#3a3a3a"/><rect x="325" y="552" width="1" height="1" fill="#3a3a3a"/><rect x="325" y="502" width="1" height="1" fill="#3a3a3a"/><rect x="325" y="452" width="1" height="1" fill="#3a3a3a"/><rect x="325" y="402" width="1" height="1" fill="#3a3a3a"/><rect x="325" y="352" width="1" height="1" fill="#3a3a3a"/><rect x="325" y="302" width="1" height="1" fill="#3a3a3a"/><rect x="325" y="252" width="1" height="1" fill="#3a3a3a"/><rect x="325" y="202" width="1" height="1" fill="#3a3a3a"/><rect x="325" y="152" width="1" height="1" fill="#3a3a3a"/><rect x="325" y="102" width="1" height="1" fill="#3a3a3a"/><rect x="325" y="52" width="1" height="1" fill="#3a3a3a"/><rect x="325" y="2" width="1" height="1" fill="#3a3a3a"/><rect x="375" y="552" width="1" height="1" fill="#3a3a3a"/><rect x="375" y="502" width="1" height="1" fill="#3a3a3a"/><rect x="375" y="452" width="1" height="1" fill="#3a3a3a"/><rect x="375" y="402" width="1" height="1" fill="#3a3a3a"/><rect x="375" y="352" width="1" height="1" fill="#3a3a3a"/><rect x="375" y="302" width="1" height="1" fill="#3a3a3a"/><rect x="375" y="252" width="1" height="1" fill="#3a3a3a"/><rect x="375" y="202" width="1" height="1" fill="#3a3a3a"/><rect x="375" y="152" width="1" height="1" fill="#3a3a3a"/><rect x="375" y="102" width="1" height="1" fill="#3a3a3a"/><rect x="375" y="52" width="1" height="1" fill="#3a3a3a"/><rect x="375" y="2" width="1" height="1" fill="#3a3a3a"/><rect x="425" y="552" width="1" height="1" fill="#3a3a3a"/><rect x="425" y="502" width="1" height="1" fill="#3a3a3a"/><rect x="425" y="452" width="1" height="1" fill="#3a3a3a"/><rect x="425" y="402" width="1" height="1" fill="#3a3a3a"/><rect x="425" y="352" width="1" height="1" fill="#3a3a3a"/><rect x="425" y="302" width="1" height="1" fill="#3a3a3a"/><rect x="425" y="252" width="1" height="1" fill="#3a3a3a"/><rect x="425" y="202" width="1" height="1" fill="#3a3a3a"/><rect x="425" y="152" width="1" height="1" fill="#3a3a3a"/><rect x="425" y="102" width="1" height="1" fill="#3a3a3a"/><rect x="425" y="52" width="1" height="1" fill="#3a3a3a"/><rect x="425" y="2" width="1" height="1" fill="#3a3a3a"/><rect x="475" y="552" width="1" height="1" fill="#3a3a3a"/><rect x="475" y="502" width="1" height="1" fill="#3a3a3a"/><rect x="475" y="452" width="1" height="1" fill="#3a3a3a"/><rect x="475" y="402" width="1" height="1" fill="#3a3a3a"/><rect x="475" y="352" width="1" height="1" fill="#3a3a3a"/><rect x="475" y="302" width="1" height="1" fill="#3a3a3a"/><rect x="475" y="252" width="1" height="1" fill="#3a3a3a"/><rect x="475" y="202" width="1" height="1" fill="#3a3a3a"/><rect x="475" y="152" width="1" height="1" fill="#3a3a3a"/><rect x="475" y="102" width="1" height="1" fill="#3a3a3a"/><rect x="475" y="52" width="1" height="1" fill="#3a3a3a"/><rect x="475" y="2" width="1" height="1" fill="#3a3a3a"/><rect x="525" y="552" width="1" height="1" fill="#3a3a3a"/><rect x="525" y="502" width="1" height="1" fill="#3a3a3a"/><rect x="525" y="452" width="1" height="1" fill="#3a3a3a"/><rect x="525" y="402" width="1" height="1" fill="#3a3a3a"/><rect x="525" y="352" width="1" height="1" fill="#3a3a3a"/><rect x="525" y="302" width="1" height="1" fill="#3a3a3a"/><rect x="525" y="252" width="1" height="1" fill="#3a3a3a"/><rect x="525" y="202" width="1" height="1" fill="#3a3a3a"/><rect x="525" y="152" width="1" height="1" fill="#3a3a3a"/><rect x="525" y="102" width="1" height="1" fill="#3a3a3a"/><rect x="525" y="52" width="1" height="1" fill="#3a3a3a"/><rect x="525" y="2" width="1" height="1" fill="#3a3a3a"/><rect x="575" y="552" width="1" height="1" fill="#3a3a3a"/><rect x="575" y="502" width="1" height="1" fill="#3a3a3a"/><rect x="575" y="452" width="1" height="1" fill="#3a3a3a"/><rect x="575" y="402" width="1" height="1" fill="#3a3a3a"/><rect x="575" y="352" width="1" height="1" fill="#3a3a3a"/><rect x="575" y="302" width="1" height="1" fill="#3a3a3a"/><rect x="575" y="252" width="1" height="1" fill="#3a3a3a"/><rect x="575" y="202" width="1" height="1" fill="#3a3a3a"/><rect x="575" y="152" width="1" height="1" fill="#3a3a3a"/><rect x="575" y="102" width="1" height="1" fill="#3a3a3a"/><rect x="575" y="52" width="1" height="1" fill="#3a3a3a"/><rect x="575" y="2" width="1" height="1" fill="#3a3a3a"/><rect x="625" y="552" width="1" height="1" fill="#3a3a3a"/><rect x="625" y="502" width="1" height="1" fill="#3a3a3a"/><rect x="625" y="452" width="1" height="1" fill="#3a3a3a"/><rect x="625" y="402" width="1" height="1" fill="#3a3a3a"/><rect x="625" y="352" width="1" height="1" fill="#3a3a3a"/><rect x="625" y="302" width="1" height="1" fill="#3a3a3a"/><rect x="625" y="252" width="1" height="1" fill="#3a3a3a"/><rect x="625" y="202" width="1" height="1" fill="#3a3a3a"/><rect x="625" y="152" width="1" height="1" fill="#3a3a3a"/><rect x="625" y="102" width="1" height="1" fill="#3a3a3a"/><rect x="625" y="52" width="1" height="1" fill="#3a3a3a"/><rect x="625" y="2" width="1" height="1" fill="#3a3a3a"/><rect x="675" y="552" width="1" height="1" fill="#3a3a3a"/><rect x="675" y="502" width="1" height="1" fill="#3a3a3a"/><rect x="675" y="452" width="1" height="1" fill="#3a3a3a"/><rect x="675" y="402" width="1" height="1" fill="#3a3a3a"/><rect x="675" y="352" width="1" height="1" fill="#3a3a3a"/><rect x="675" y="302" width="1" height="1" fill="#3a3a3a"/><rect x="675" y="252" width="1" height="1" fill="#3a3a3a"/><rect x="675" y="202" width="1" height="1" fill="#3a3a3a"/><rect x="675" y="152" width="1" height="1" fill="#3a3a3a"/><rect x="675" y="102" width="1" height="1" fill="#3a3a3a"/><rect x="675" y="52" width="1" height="1" fill="#3a3a3a"/><rect x="675" y="2" width="1" height="1" fill="#3a3a3a"/><rect x="725" y="552" width="1" height="1" fill="#3a3a3a"/><rect x="725" y="502" width="1" height="1" fill="#3a3a3a"/><rect x="725" y="452" width="1" height="1" fill="#3a3a3a"/><rect x="725" y="402" width="1" height="1" fill="#3a3a3a"/><rect x="725" y="352" width="1" height="1" fill="#3a3a3a"/><rect x="725" y="302" width="1" height="1" fill="#3a3a3a"/><rect x="725" y="252" width="1" height="1" fill="#3a3a3a"/><rect x="725" y="202" width="1" height="1" fill="#3a3a3a"/><rect x="725" y="152" width="1" height="1" fill="#3a3a3a"/><rect x="725" y="102" width="1" height="1" fill="#3a3a3a"/><rect x="725" y="52" width="1" height="1" fill="#3a3a3a"/><rect x="725" y="2" width="1" height="1" fill="#3a3a3a"/><rect x="775" y="552" width="1" height="1" fill="#3a3a3a"/><rect x="775" y="502" width="1" height="1" fill="#3a3a3a"/><rect x="775" y="452" width="1" height="1" fill="#3a3a3a"/><rect x="775" y="402" width="1" height="1" fill="#3a3a3a"/><rect x="775" y="352" width="1" height="1" fill="#3a3a3a"/><rect x="775" y="302" width="1" height="1" fill="#3a3a3a"/><rect x="775" y="252" width="1" height="1" fill="#3a3a3a"/><rect x="775" y="202" width="1" height="1" fill="#3a3a3a"/><rect x="775" y="152" width="1" height="1" fill="#3a3a3a"/><rect x="775" y="102" width="1" height="1" fill="#3a3a3a"/><rect x="775" y="52" width="1" height="1" fill="#3a3a3a"/><rect x="775" y="2" width="1" height="1" fill="#3a3a3a"/><rect x="825" y="552" width="1" height="1" fill="#3a3a3a"/><rect x="825" y="502" width="1" height="1" fill="#3a3a3a"/><rect x="825" y="452" width="1" height="1" fill="#3a3a3a"/><rect x="825" y="402" width="1" height="1" fill="#3a3a3a"/><rect x="825" y="352" width="1" height="1" fill="#3a3a3a"/><rect x="825" y="302" width="1" height="1" fill="#3a3a3a"/><rect x="825" y="252" width="1" height="1" fill="#3a3a3a"/><rect x="825" y="202" width="1" height="1" fill="#3a3a3a"/><rect x="825" y="152" width="1" height="1" fill="#3a3a3a"/><rect x="825" y="102" width="1" height="1" fill="#3a3a3a"/><rect x="825" y="52" width="1" height="1" fill="#3a3a3a"/><rect x="825" y="2" width="1" height="1" fill="#3a3a3a"/><rect x="875" y="552" width="1" height="1" fill="#3a3a3a"/><rect x="875" y="502" width="1" height="1" fill="#3a3a3a"/><rect x="875" y="452" width="1" height="1" fill="#3a3a3a"/><rect x="875" y="402" width="1" height="1" fill="#3a3a3a"/><rect x="875" y="352" width="1" height="1" fill="#3a3a3a"/><rect x="875" y="302" width="1" height="1" fill="#3a3a3a"/><rect x="875" y="252" width="1" height="1" fill="#3a3a3a"/><rect x="875" y="202" width="1" height="1" fill="#3a3a3a"/><rect x="875" y="152" width="1" height="1" fill="#3a3a3a"/><rect x="875" y="102" width="1" height="1" fill="#3a3a3a"/><rect x="875" y="52" width="1" height="1" fill="#3a3a3a"/><rect x="875" y="2" width="1" height="1" fill="#3a3a3a"/><rect x="925" y="552" width="1" height="1" fill="#3a3a3a"/><rect x="925" y="502" width="1" height="1" fill="#3a3a3a"/><rect x="925" y="452" width="1" height="1" fill="#3a3a3a"/><rect x="925" y="402" width="1" height="1" fill="#3a3a3a"/><rect x="925" y="352" width="1" height="1" fill="#3a3a3a"/><rect x="925" y="302" width="1" height="1" fill="#3a3a3a"/><rect x="925" y="252" width="1" height="1" fill="#3a3a3a"/><rect x="925" y="202" width="1" height="1" fill="#3a3a3a"/><rect x="925" y="152" width="1" height="1" fill="#3a3a3a"/><rect x="925" y="102" width="1" height="1" fill="#3a3a3a"/><rect x="925" y="52" width="1" height="1" fill="#3a3a3a"/><rect x="925" y="2" width="1" height="1" fill="#3a3a3a"/><rect x="975" y="552" width="1" height="1" fill="#3a3a3a"/><rect x="975" y="502" width="1" height="1" fill="#3a3a3a"/><rect x="975" y="452" width="1" height="1" fill="#3a3a3a"/><rect x="975" y="402" width="1" height="1" fill="#3a3a3a"/><rect x="975" y="352" width="1" height="1" fill="#3a3a3a"/><rect x="975" y="302" width="1" height="1" fill="#3a3a3a"/><rect x="975" y="252" width="1" height="1" fill="#3a3a3a"/><rect x="975" y="202" width="1" height="1" fill="#3a3a3a"/><rect x="975" y="152" width="1" height="1" fill="#3a3a3a"/><rect x="975" y="102" width="1" height="1" fill="#3a3a3a"/><rect x="975" y="52" width="1" height="1" fill="#3a3a3a"/><rect x="975" y="2" width="1" height="1" fill="#3a3a3a"/><rect x="1025" y="552" width="1" height="1" fill="#3a3a3a"/><rect x="1025" y="502" width="1" height="1" fill="#3a3a3a"/><rect x="1025" y="452" width="1" height="1" fill="#3a3a3a"/><rect x="1025" y="402" width="1" height="1" fill="#3a3a3a"/><rect x="1025" y="352" width="1" height="1" fill="#3a3a3a"/><rect x="1025" y="302" width="1" height="1" fill="#3a3a3a"/><rect x="1025" y="252" width="1" height="1" fill="#3a3a3a"/><rect x="1025" y="202" width="1" height="1" fill="#3a3a3a"/><rect x="1025" y="152" width="1" height="1" fill="#3a3a3a"/><rect x="1025" y="102" width="1" height="1" fill="#3a3a3a"/><rect x="1025" y="52" width="1" height="1" fill="#3a3a3a"/><rect x="1025" y="2" width="1" height="1" fill="#3a3a3a"/><rect x="4.8" y="551.2" width="40.4" height="2" fill="#540a0a"/><rect x="24.2" y="532" width="2" height="40.2" fill="#540a0a"/><rect x="24.2" y="551.2" width="2" height="2" fill="#7a1010"/><rect x="275" y="401" width="500" height="2" fill="#b4b4b4"/><path d="M770.2 402H779.8M775 397.2V406.8" stroke="#6e0000" stroke-width="1.5" opacity="0.8"/><circle cx="775" cy="402" r="4.8" fill="none" stroke="#860000" stroke-width="1.2"/><defs><radialGradient id="ring" gradientUnits="userSpaceOnUse" cx="522.3" cy="287.9" r="39.8"><stop offset="0.73" stop-color="#000" stop-opacity="0"/><stop offset="0.77" stop-color="#141a20"/><stop offset="0.82" stop-color="#2f3a44"/><stop offset="0.87" stop-color="#485762"/><stop offset="0.92" stop-color="#586976"/><stop offset="0.965" stop-color="#61737f"/><stop offset="0.985" stop-color="#4d5c68"/><stop offset="1" stop-color="#20282e" stop-opacity="0"/></radialGradient></defs><circle cx="522.3" cy="287.9" r="39.8" fill="url(#ring)"/><circle cx="522.3" cy="287.9" r="38.2" fill="none" stroke="#8ea2b4" stroke-width="0.6" opacity="0.35"/><circle cx="522.3" cy="287.9" r="36.6" fill="none" stroke="#8ea2b4" stroke-width="0.6" opacity="0.28"/><circle cx="522.3" cy="287.9" r="35.0" fill="none" stroke="#8ea2b4" stroke-width="0.6" opacity="0.22"/><circle cx="522.3" cy="287.9" r="33.4" fill="none" stroke="#8ea2b4" stroke-width="0.6" opacity="0.16"/><g transform="translate(522.3,287.5) scale(1.27)"><path d="M0 0V17.2L3.9 13.7L7.6 21.2L11.2 19.6L7.6 12.4L12.7 12Z" fill="#fff" stroke="#fff" stroke-width="2.2" stroke-linejoin="round"/><path d="M0 0V17.2L3.9 13.7L7.6 21.2L11.2 19.6L7.6 12.4L12.7 12Z" fill="#fff" stroke="#111" stroke-width="0.85" stroke-linejoin="round"/></g></svg>
<svg class="a" style="left:611px;top:145px;" width="13" height="7" viewBox="0 0 13 7"><path d="M0.6 0.2H12.2L6.4 5.8Z" fill="#000"/></svg>
<svg class="a" style="left:84px;top:436px;" width="8" height="14" viewBox="0 0 8 14"><path d="M0.9 1V13L7.3 7Z" fill="#000"/></svg>
<div class="a" style="left:1139px;top:155px;width:15px;height:577px;background:#fafafa"></div>
<div class="a" style="left:1143px;top:158px;width:8px;height:411px;background:#808080;border-radius:4px"></div>
<div class="a" style="left:95px;top:732px;width:988px;height:15px;background:linear-gradient(#fafafa,#f2f2f2)"></div>
<div class="a" style="left:72px;top:732px;width:23px;height:15px;background:#ececec"></div>
<div class="a" style="left:157.5px;top:736.2px;width:819.3px;height:7.4px;background:#808080;border-radius:4px"></div>
<div class="a" style="left:1083px;top:732px;width:71px;height:16px;background:#ececec"></div>
<div class="t" style="left:1103.50px;top:730.50px;font-size:13px;line-height:20px;letter-spacing:-0.183px;color:#111;">10 &lt; 100</div>
<div class="a" style="left:72px;top:748px;width:1082px;height:2px;background:#c4c4c4"></div>
<div class="a" style="left:73px;top:750px;width:1080px;height:20px;background:#fff"></div>
<div class="a" style="left:72px;top:770px;width:1082px;height:1px;background:#b6b6b6"></div>
<div class="a" style="left:1139px;top:750px;width:14px;height:20px;background:#f7f7f7"></div>
<div class="a" style="left:1142px;top:750px;width:8px;height:16.5px;background:#808080;border-radius:0 0 4px 4px"></div>
<div class="t" style="left:77.00px;top:748.00px;font-size:13px;line-height:20px;letter-spacing:0.000px;color:#0000dd;font-style:italic;">Command: </div>
<div class="t" style="left:145.19px;top:748.00px;font-size:13px;line-height:20px;letter-spacing:0.000px;color:#0000dd;">li</div>
<div class="t" style="left:73.00px;top:775.50px;font-size:13.5px;line-height:20px;letter-spacing:-0.128px;color:#111;">Command:</div>
<div class="a" style="left:142px;top:776px;width:985px;height:18px;background:#fff"></div>
<div class="a" style="left:1127.5px;top:772.5px;width:25px;height:24.5px;box-sizing:border-box;border:1px solid #b9b9b9;background:linear-gradient(#fafafa,#ececec)"></div>
<svg class="a" style="left:1133px;top:780px;" width="14" height="10" viewBox="0 0 14 10"><rect x="0.5" y="0.5" width="13" height="9" fill="#fff" stroke="#000" stroke-width="1"/><rect x="0" y="0" width="14" height="2.6" fill="#000"/></svg>
<div class="a" style="left:1154px;top:108px;width:300px;height:690px;background:#fff"></div>
<div class="a" style="left:1153.5px;top:108px;width:1.5px;height:690px;background:#cfcfcf"></div>
<div class="a" style="left:1154.5px;top:108px;width:300px;height:22.5px;background:linear-gradient(#ebebeb,#e4e4e4 40%,#d9d9d9)"></div>
<div class="t" style="left:1297.00px;top:108.50px;font-size:12.5px;line-height:20px;letter-spacing:-0.319px;color:#111;">Layer List</div>
<svg class="a" style="left:1157px;top:111px;" width="14" height="14" viewBox="0 0 14 14"><circle cx="7" cy="7" r="6.8" fill="#6f6f6f"/><path d="M4.2 4.2L9.8 9.8M9.8 4.2L4.2 9.8" stroke="#fff" stroke-width="2" stroke-linecap="round"/></svg>
<svg class="a" style="left:1175px;top:111px;" width="14" height="14" viewBox="0 0 14 14"><circle cx="7" cy="7" r="6.8" fill="#6f6f6f"/><rect x="5.6" y="3.6" width="5" height="4.2" fill="none" stroke="#fff" stroke-width="1.1"/><rect x="3.4" y="6" width="5" height="4.2" fill="#6f6f6f" stroke="#fff" stroke-width="1.1"/></svg>
<div class="a" style="left:1155px;top:130px;width:299.5px;height:27px;background:linear-gradient(#ececec,#f8f8f8)"></div>
<div class="a" style="left:1155px;top:129.8px;width:299.5px;height:1.3px;background:#b4b4b4"></div>
<div class="a" style="left:1155px;top:155px;width:299.5px;height:1.8px;background:#b2b2b2"></div>
<div class="a" style="left:1214.2px;top:131px;width:1.6px;height:25px;background:#b4b4b4"></div>
<div class="a" style="left:1274.2px;top:131px;width:1.6px;height:25px;background:#b4b4b4"></div>
<div class="a" style="left:1334.2px;top:131px;width:1.6px;height:25px;background:#b4b4b4"></div>
<div class="a" style="left:1394.2px;top:131px;width:1.6px;height:25px;background:#b4b4b4"></div>
<div class="a" style="left:1154.6px;top:131px;width:1.2px;height:25px;background:#c0c0c0"></div>
<div class="a" style="left:1453px;top:108px;width:1.5px;height:690px;background:#d4d4d4"></div>
<div class="a" style="left:1161px;top:163.5px;width:16px;height:8.5px;box-sizing:border-box;border:1px solid #000;background:#fff"></div>
<div class="t" style="left:1183.50px;top:157.50px;font-size:13px;line-height:20px;letter-spacing:0.000px;color:#111;">0</div>
<div class="a" style="left:1454.5px;top:108px;width:45.5px;height:690px;background:linear-gradient(90deg,#e9e9e9,#dedede 45%,#c2c2c2)"></div>
<div class="a" style="left:1454px;top:108px;width:1px;height:690px;background:#c4c4c4"></div>
<div class="a" style="left:1462px;top:116px;width:2px;height:2px;background:#a4a4a4"></div>
<div class="a" style="left:1468px;top:116px;width:2px;height:2px;background:#a4a4a4"></div>
<div class="a" style="left:1474px;top:116px;width:2px;height:2px;background:#a4a4a4"></div>
<div class="a" style="left:1480px;top:116px;width:2px;height:2px;background:#a4a4a4"></div>
<div class="a" style="left:1486px;top:116px;width:2px;height:2px;background:#a4a4a4"></div>
<div class="a" style="left:1456.5px;top:120.7px;width:43px;height:42px;background:#b7b7b7;border-radius:5px"></div>
<div class="a" style="left:1456.5px;top:417px;width:43px;height:42px;background:#b7b7b7;border-radius:5px"></div>
<div class="a" style="left:1458px;top:260.5px;width:42px;height:1px;background:repeating-linear-gradient(90deg,#6e6e6e 0 1px,transparent 1px 3px)"></div>
<div class="a" style="left:1458px;top:408.5px;width:42px;height:1px;background:repeating-linear-gradient(90deg,#6e6e6e 0 1px,transparent 1px 3px)"></div>
<svg class="a" style="left:1150px;top:100px" width="350" height="420" viewBox="1150 100 350 420"><defs>
<g id="eye"><path d="M-7.7 0.2C-5.4 -4.6 -2.6 -6 0.2 -6C3.4 -6 6 -4 7.7 0C5.4 4.2 3 5.5 0 5.5C-3.2 5.5 -5.6 4 -7.7 0.2Z" fill="currentColor"/><ellipse cx="0" cy="0.7" rx="5" ry="3" fill="#fff"/><circle cx="0" cy="-0.7" r="2.6" fill="currentColor"/><circle cx="-0.9" cy="-1.1" r="0.75" fill="#fff" opacity="0.55"/></g>
<g id="pencil2"><path d="M0 0L2.8 -1.75H17.2V1.75H2.8Z" fill="#e6a93c"/><path d="M2.8 -0.6H17.2M2.8 0.7H17.2" stroke="#b9791c" stroke-width="0.5"/><path d="M0 0L2.8 -1.75V1.75Z" fill="#d8b878"/><path d="M0 0L1.3 -0.8V0.8Z" fill="#3a2a10"/><rect x="17.2" y="-1.75" width="2.6" height="3.5" fill="#e02828"/><path d="M0 0L2.8 -1.75H19.8V1.75H2.8Z" fill="none" stroke="#8a5a18" stroke-width="0.35"/></g>
<g id="wframe"><rect x="0.5" y="0.5" width="26.6" height="26.6" fill="#fff" stroke="#2e2e2e" stroke-width="1"/><rect x="0" y="0" width="27.6" height="4.8" fill="#000"/><rect x="1" y="1" width="2.9" height="2.9" fill="#fff"/></g>
</defs><g color="#000"><use href="#eye" x="1185" y="142.7"/><use href="#eye" x="1423.2" y="166.9"/></g><g color="#a2a2a2"><use href="#eye" x="1244.7" y="142.7"/></g><path d="M1299.2 143H1311M1305.1 137.1V148.9" stroke="#7a0000" stroke-width="3.7"/><path d="M1299.7 143H1310.5M1305.1 137.6V148.4" stroke="#ff0000" stroke-width="2.7"/><path d="M1358.8 143H1371.2" stroke="#7a0000" stroke-width="3.7"/><path d="M1359.3 143H1370.7" stroke="#ff0000" stroke-width="2.7"/><use href="#pencil2" transform="translate(1417.8,149.8) rotate(-43)"/><use href="#pencil2" transform="translate(1394.5,173.4) rotate(-43.6) scale(0.93)"/><path d="M1442.2 167V164.2Q1442.2 160.5 1445 160.5Q1447.8 160.5 1447.8 164.2V167" fill="none" stroke="#bdbdbd" stroke-width="1.3"/><rect x="1440.3" y="166.8" width="9.5" height="6.8" fill="#b9b9b9"/><use href="#wframe" x="1463.3" y="127.2"/><use href="#wframe" x="1463.3" y="173.7"/><use href="#wframe" x="1463.3" y="219.8"/><use href="#wframe" x="1463.3" y="276.3"/><use href="#wframe" x="1463.3" y="322.3"/><use href="#wframe" x="1463.3" y="368.2"/><use href="#wframe" x="1463.3" y="424"/><use href="#wframe" x="1463.3" y="471"/><g transform="translate(1463.3,127.2)"><path d="M7.4 13.2L14.6 9.8V19.8L7.4 23.2Z" fill="#d8d8d8" stroke="#555" stroke-width="0.7"/><path d="M9.6 12.4L16.8 9V19L9.6 22.4Z" fill="#e4e4e4" stroke="#555" stroke-width="0.7"/><path d="M12 11.6L20.4 7.8V17.8L12 21.6Z" fill="#f4f4f4" stroke="#555" stroke-width="0.7"/><path d="M14 19L17.8 12.2L18.4 17.2ZM15.4 17.6H18.4" fill="none" stroke="#e83030" stroke-width="0.8"/></g><g transform="translate(1463.3,173.7)"><rect x="7.2" y="10.2" width="10.4" height="7.4" fill="#f3e9b4" stroke="#777" stroke-width="0.8"/><circle cx="16.2" cy="17" r="4.3" fill="#f3e9b4" fill-opacity="0.8" stroke="#777" stroke-width="0.8"/></g><g transform="translate(1463.3,219.8)"><rect x="5.4" y="10.4" width="16.8" height="10.6" rx="2.2" fill="#f7f5f0" stroke="#c6d6ee" stroke-width="1.2"/></g><g transform="translate(1463.3,276.3)"><rect x="3.4" y="8" width="4.2" height="3" fill="#000"/><rect x="3.4" y="14" width="4.2" height="3" fill="#000"/><rect x="3.4" y="20" width="4.2" height="3" fill="#000"/><rect x="10.4" y="8.2" width="13.6" height="2.8" fill="#fff" stroke="#333" stroke-width="0.8"/><rect x="10.4" y="14.2" width="13.6" height="2.8" fill="#fff" stroke="#333" stroke-width="0.8"/><rect x="10.4" y="20.2" width="13.6" height="2.8" fill="#fff" stroke="#333" stroke-width="0.8"/></g><g transform="translate(1463.3,322.3)"><path d="M6.6 10.6Q13.8 7.6 21 10.6L15.6 16.4V22.6L12.4 21V16.4Z" fill="#9a9a9a" stroke="#6a6a6a" stroke-width="0.6"/><ellipse cx="13.8" cy="10.4" rx="7.2" ry="1.7" fill="#777"/><path d="M14.4 16.6V21.6" stroke="#d8d8d8" stroke-width="0.9"/></g><g transform="translate(1463.3,368.2)"><path d="M3.4 15.8H24" stroke="#f2a0a0" stroke-width="0.9" stroke-dasharray="1.6 1"/><path d="M6 10L9.6 12.4V19.4L6 21.8Z" fill="#f4f4f4" stroke="#333" stroke-width="0.8"/><rect x="9.6" y="12.4" width="11.4" height="7" rx="1.2" fill="#a8a8a8" stroke="#666" stroke-width="0.6"/><path d="M12 12.6V19.2M14.2 12.6V19.2M16.4 12.6V19.2M18.6 12.6V19.2" stroke="#6e6e6e" stroke-width="0.7"/></g><g transform="translate(1463.3,424)"><path d="M2.4 8.6H18M2.4 11.9H16M2.4 15.2H19M2.4 18.5H19.4" stroke="#9a9a9a" stroke-width="1.1" stroke-dasharray="2.2 0.6 4 0.5 3 0.7"/><path d="M0.5 21.4H27" stroke="#2e2e2e" stroke-width="0.9"/><path d="M3 24.4H5.4M9.4 24.4H24.4" stroke="#555" stroke-width="1.3" stroke-dasharray="1.8 0.5"/></g><g transform="translate(1463.3,471)"><rect x="7.4" y="10.2" width="12.8" height="13.4" rx="1" fill="#c98a1e" stroke="#a56c10" stroke-width="0.6"/><rect x="9" y="11.6" width="9.6" height="10.6" fill="#f8f8f8"/><path d="M10.4 14.6H17.2M10.4 16.6H17.2M10.4 18.6H15.6" stroke="#c4c4c4" stroke-width="0.8"/><rect x="11" y="8.8" width="5.6" height="3" rx="0.8" fill="#a2a296" stroke="#76766c" stroke-width="0.5"/><path d="M18.6 22.2H15.6L18.6 19.4Z" fill="#9a9a9a"/></g></svg>
<div class="a" style="left:0px;top:798px;width:1500px;height:46px;background:#dcdcdc"></div>
<div class="a" style="left:72px;top:797px;width:1382px;height:1.5px;background:#cacaca"></div>
<div class="t" style="left:2.00px;top:802.50px;font-size:9.8px;line-height:20px;letter-spacing:0.348px;color:#111;-webkit-text-stroke:0.25px #111;">99.4,52.8</div>
<div class="t" style="left:2.00px;top:822.50px;font-size:9.8px;line-height:20px;letter-spacing:0.265px;color:#111;-webkit-text-stroke:0.25px #111;">@-50.6,22.8</div>
<div class="a" style="left:253.4px;top:802px;width:1px;height:40px;background:#808080"></div>
<div class="a" style="left:254.4px;top:802px;width:1px;height:40px;background:#f2f2f2"></div>
<div class="t" style="left:256.00px;top:802.50px;font-size:9.8px;line-height:20px;letter-spacing:0.125px;color:#111;-webkit-text-stroke:0.25px #111;">112.55</div>
<div class="t" style="left:256.00px;top:822.50px;font-size:9.8px;line-height:20px;letter-spacing:-0.005px;color:#111;-webkit-text-stroke:0.25px #111;">@55.4</div>
<div class="t" style="left:598.00px;top:812.50px;font-size:9.8px;line-height:20px;letter-spacing:0.270px;color:#111;-webkit-text-stroke:0.25px #111;">Select entity or region</div>
<div class="t" style="left:949.00px;top:812.50px;font-size:9.8px;line-height:20px;letter-spacing:0.274px;color:#111;-webkit-text-stroke:0.25px #111;">No entities selected.</div>
<div class="a" style="left:507px;top:819px;width:6px;height:6px;background:#c6c6c6;border-radius:3px"></div>
<div class="a" style="left:940px;top:819px;width:6px;height:6px;background:#c6c6c6;border-radius:3px"></div>
<div class="a" style="left:1269.5px;top:819px;width:6px;height:6px;background:#c6c6c6;border-radius:3px"></div>
<svg class="a" style="left:717px;top:805px;" width="19" height="32" viewBox="0 0 19 32"><rect x="1.1" y="1.6" width="16.8" height="28.8" rx="8.2" fill="#fff" stroke="#3a3a3a" stroke-width="1"/><path d="M1.3 14.6Q9.5 11.6 17.7 14.6" fill="none" stroke="#3a3a3a" stroke-width="1.3"/><path d="M9.5 1.8V13" stroke="#3a3a3a" stroke-width="0.9"/><rect x="8.2" y="3.8" width="2.6" height="6.8" rx="1.2" fill="#fff" stroke="#3a3a3a" stroke-width="0.9"/></svg>
<div class="a" style="left:286px;top:30px;width:222px;height:820px;background:#ebebeb;border-radius:6px 6px 0 0"></div>
<div class="t" style="left:326.00px;top:32.80px;font-size:13px;line-height:20px;letter-spacing:0.230px;color:#b3b3b3;">Move / Copy (MV)</div>
<div class="t" style="left:326.00px;top:52.80px;font-size:13px;line-height:20px;letter-spacing:0.093px;color:#b3b3b3;">Rotate (RO)</div>
<div class="t" style="left:326.00px;top:72.80px;font-size:13px;line-height:20px;letter-spacing:0.166px;color:#b3b3b3;">Scale (SZ)</div>
<div class="t" style="left:326.00px;top:92.80px;font-size:13px;line-height:20px;letter-spacing:0.325px;color:#b3b3b3;">Mirror (MI)</div>
<div class="t" style="left:326.00px;top:112.80px;font-size:13px;line-height:20px;letter-spacing:0.232px;color:#b3b3b3;">Flip Horizontal (FH)</div>
<div class="t" style="left:326.00px;top:132.80px;font-size:13px;line-height:20px;letter-spacing:0.225px;color:#b3b3b3;">Flip Vertical (FV)</div>
<div class="t" style="left:326.00px;top:152.80px;font-size:13px;line-height:20px;letter-spacing:0.158px;color:#b3b3b3;">Move and Rotate (MR)</div>
<div class="t" style="left:326.00px;top:172.80px;font-size:13px;line-height:20px;letter-spacing:0.185px;color:#b3b3b3;">Rotate Two (R2)</div>
<div class="t" style="left:326.00px;top:192.80px;font-size:13px;line-height:20px;letter-spacing:0.140px;color:#b3b3b3;">Align Reference Points (AE)</div>
<div class="t" style="left:326.00px;top:212.80px;font-size:13px;line-height:20px;letter-spacing:0.280px;color:#b3b3b3;">Align (MA)</div>
<div class="t" style="left:326.00px;top:244.80px;font-size:13px;line-height:20px;letter-spacing:0.333px;color:#242424;">Offset (with Distance) (OF)</div>
<div class="t" style="left:326.00px;top:264.80px;font-size:13px;line-height:20px;letter-spacing:0.353px;color:#242424;">Offset (through Point) (OH)</div>
<div class="t" style="left:326.00px;top:296.80px;font-size:13px;line-height:20px;letter-spacing:0.126px;color:#242424;">Trim (RM)</div>
<div class="t" style="left:326.00px;top:316.80px;font-size:13px;line-height:20px;letter-spacing:0.277px;color:#242424;">Trim Both (TM)</div>
<div class="t" style="left:326.00px;top:336.80px;font-size:13px;line-height:20px;letter-spacing:0.224px;color:#242424;">Lengthen / Shorten (LE)</div>
<div class="t" style="left:326.00px;top:356.80px;font-size:13px;line-height:20px;letter-spacing:0.246px;color:#242424;">Stretch (SS)</div>
<div class="t" style="left:326.00px;top:376.80px;font-size:13px;line-height:20px;letter-spacing:0.174px;color:#b3b3b3;">Clip to Rectangle (CLR)</div>
<div class="t" style="left:326.00px;top:408.80px;font-size:13px;line-height:20px;letter-spacing:0.160px;color:#242424;">Chamfer / Bevel (CH)</div>
<div class="t" style="left:326.00px;top:428.80px;font-size:13px;line-height:20px;letter-spacing:0.016px;color:#242424;">Round (RN)</div>
<div class="t" style="left:326.00px;top:460.80px;font-size:13px;line-height:20px;letter-spacing:0.210px;color:#242424;">Divide (DI)</div>
<div class="t" style="left:326.00px;top:480.80px;font-size:13px;line-height:20px;letter-spacing:0.244px;color:#b3b3b3;">Split Entities (MS)</div>
<div class="t" style="left:326.00px;top:500.80px;font-size:13px;line-height:20px;letter-spacing:0.277px;color:#242424;">Break out Segment (D2)</div>
<div class="t" style="left:326.00px;top:520.80px;font-size:13px;line-height:20px;letter-spacing:0.212px;color:#242424;">Break out Manual (B2)</div>
<div class="t" style="left:326.00px;top:540.80px;font-size:13px;line-height:20px;letter-spacing:0.228px;color:#242424;">Auto Trim (AX)</div>
<div class="t" style="left:326.00px;top:560.80px;font-size:13px;line-height:20px;letter-spacing:0.211px;color:#242424;">Break out Gap (D3)</div>
<div class="t" style="left:326.00px;top:592.80px;font-size:13px;line-height:20px;letter-spacing:-0.046px;color:#b3b3b3;">Reverse (RV)</div>
<div class="t" style="left:326.00px;top:624.80px;font-size:13px;line-height:20px;letter-spacing:0.280px;color:#242424;">Edit Text (MT)</div>
<div class="t" style="left:326.00px;top:644.80px;font-size:13px;line-height:20px;letter-spacing:0.285px;color:#242424;">Edit Tolerance (ML)</div>
<div class="t" style="left:326.00px;top:664.80px;font-size:13px;line-height:20px;letter-spacing:0.303px;color:#242424;">Edit Hatch (MH)</div>
<div class="t" style="left:326.00px;top:696.80px;font-size:13px;line-height:20px;letter-spacing:0.155px;color:#b3b3b3;">Explode (XP)</div>
<div class="t" style="left:326.00px;top:728.80px;font-size:13px;line-height:20px;letter-spacing:0.202px;color:#242424;">Draw Order</div>
<svg class="a" style="left:488.2px;top:735.0px;" width="9" height="10" viewBox="0 0 9 10"><path d="M0 0L8.1 4.7L0 9.4Z" fill="#262626"/></svg>
<div class="t" style="left:326.00px;top:760.80px;font-size:13px;line-height:20px;letter-spacing:0.447px;color:#242424;">Detection</div>
<svg class="a" style="left:488.2px;top:767.0px;" width="9" height="10" viewBox="0 0 9 10"><path d="M0 0L8.1 4.7L0 9.4Z" fill="#262626"/></svg>
<div class="t" style="left:326.00px;top:792.80px;font-size:13px;line-height:20px;letter-spacing:0.354px;color:#242424;">Projection</div>
<svg class="a" style="left:488.2px;top:799.0px;" width="9" height="10" viewBox="0 0 9 10"><path d="M0 0L8.1 4.7L0 9.4Z" fill="#262626"/></svg>
<div class="t" style="left:326.00px;top:824.80px;font-size:13px;line-height:20px;letter-spacing:0.211px;color:#b3b3b3;">Property Painter (PI)</div>
<div class="a" style="left:286px;top:239px;width:222px;height:2px;background:#d3d3d3"></div>
<div class="a" style="left:286px;top:291px;width:222px;height:2px;background:#d3d3d3"></div>
<div class="a" style="left:286px;top:403px;width:222px;height:2px;background:#d3d3d3"></div>
<div class="a" style="left:286px;top:455px;width:222px;height:2px;background:#d3d3d3"></div>
<div class="a" style="left:286px;top:587px;width:222px;height:2px;background:#d3d3d3"></div>
<div class="a" style="left:286px;top:619px;width:222px;height:2px;background:#d3d3d3"></div>
<div class="a" style="left:286px;top:691px;width:222px;height:2px;background:#d3d3d3"></div>
<div class="a" style="left:286px;top:723px;width:222px;height:2px;background:#d3d3d3"></div>
<div class="a" style="left:286px;top:755px;width:222px;height:2px;background:#d3d3d3"></div>
<div class="a" style="left:286px;top:787px;width:222px;height:2px;background:#d3d3d3"></div>
<div class="a" style="left:286px;top:819px;width:222px;height:2px;background:#d3d3d3"></div>
<svg class="a" style="left:306px;top:35.5px;overflow:visible;opacity:0.42;" width="16" height="16" viewBox="0 0 16 16"><path d="M1.3 2.2L1.1 14.3H6.4Z" fill="none" stroke="#3c3c3c" stroke-width="1" /><path d="M10.6 2.2L10 14.3H15.1Z" fill="none" stroke="#ee1c1c" stroke-width="1" /><path d="M3.6 8.3H10.4" fill="none" stroke="#5a5aff" stroke-width="1.2" stroke-dasharray="1.6 0.8"/><path d="M8.3 6.8L10.4 8.3L8.3 9.8" fill="none" stroke="#5a5aff" stroke-width="0.9" /></svg>
<svg class="a" style="left:306px;top:55.5px;overflow:visible;opacity:0.42;" width="16" height="16" viewBox="0 0 16 16"><path d="M1.3 7.6L1.1 14.7H6.2Z" fill="none" stroke="#3c3c3c" stroke-width="1" /><path d="M13.5 1.3L7 5.2L13.5 5.8Z" fill="none" stroke="#ee1c1c" stroke-width="1" /><path d="M7 13.5Q10.5 12 11.4 8.6" fill="none" stroke="#5a5aff" stroke-width="1.3" stroke-dasharray="1.6 0.9"/><circle cx="11.2" cy="7.2" r="1.4" fill="none" stroke="#5a5aff" stroke-width="0.9"/></svg>
<svg class="a" style="left:306px;top:75.5px;overflow:visible;opacity:0.42;" width="16" height="16" viewBox="0 0 16 16"><path d="M1.3 2.9L1.1 14.8H6.2Z" fill="none" stroke="#3c3c3c" stroke-width="1" /><path d="M11.8 4.5L11.2 12H14.7Z" fill="none" stroke="#ee1c1c" stroke-width="1" /><path d="M4.4 9.2H11" fill="none" stroke="#5a5aff" stroke-width="1.2" stroke-dasharray="1.6 0.8"/><path d="M9 7.8L11 9.2L9 10.6" fill="none" stroke="#5a5aff" stroke-width="0.9" /></svg>
<svg class="a" style="left:306px;top:95.5px;overflow:visible;opacity:0.42;" width="16" height="16" viewBox="0 0 16 16"><path d="M1.1 6.4L12.4 1.1L4.7 9Z" fill="none" stroke="#3c3c3c" stroke-width="1" /><path d="M15.3 4L6.8 11.7L10 15.3Z" fill="none" stroke="#ee1c1c" stroke-width="1" /><path d="M4 12.3L14.1 1.7" fill="none" stroke="#5a5aff" stroke-width="0.8" stroke-dasharray="1.2 0.8"/></svg>
<svg class="a" style="left:306px;top:115.5px;overflow:visible;opacity:0.42;" width="16" height="16" viewBox="0 0 16 16"><path d="M6.2 2.8L1.3 14.2H6.2Z" fill="none" stroke="#3c3c3c" stroke-width="1" /><path d="M10.6 2.8L10.2 14.2H15.1Z" fill="none" stroke="#ee1c1c" stroke-width="1" /><path d="M8.5 1.5V15.5" fill="none" stroke="#5a5aff" stroke-width="0.8" stroke-dasharray="1.2 0.9"/></svg>
<svg class="a" style="left:306px;top:135.5px;overflow:visible;opacity:0.42;" width="16" height="16" viewBox="0 0 16 16"><path d="M2.1 2.2L14.1 6L2.1 6.6Z" fill="none" stroke="#3c3c3c" stroke-width="1" /><path d="M2.1 10.7H14.1L2.1 14.9Z" fill="none" stroke="#ee1c1c" stroke-width="1" /><path d="M1 8.3H15" fill="none" stroke="#5a5aff" stroke-width="1" stroke-dasharray="1.2 0.8"/></svg>
<svg class="a" style="left:306px;top:155.5px;overflow:visible;opacity:0.42;" width="16" height="16" viewBox="0 0 16 16"><path d="M1.1 4.9H14.7" fill="none" stroke="#5a5aff" stroke-width="0.9" /><circle cx="5.3" cy="4.9" r="1" fill="#ebebeb" stroke="#5a5aff" stroke-width="0.8"/><circle cx="11.5" cy="4.9" r="2.1" fill="none" stroke="#5a5aff" stroke-width="0.9" stroke-dasharray="1.4 0.7"/><path d="M1.7 8.5L1.3 14.7H6.4Z" fill="none" stroke="#3c3c3c" stroke-width="1" /><path d="M14.7 9.1L8.8 12.6L14.7 13.2Z" fill="none" stroke="#ee1c1c" stroke-width="1" /></svg>
<svg class="a" style="left:306px;top:175.5px;overflow:visible;opacity:0.42;" width="16" height="16" viewBox="0 0 16 16"><path d="M1.5 8L1.3 14H6.2Z" fill="none" stroke="#3c3c3c" stroke-width="1" /><path d="M9.6 1.5L9.4 8L14.4 7.7Z" fill="none" stroke="#ee1c1c" stroke-width="1" /><path d="M6.8 14Q10.8 13 11.5 9.2" fill="none" stroke="#5a5aff" stroke-width="1.3" stroke-dasharray="1.5 0.9"/></svg>
<svg class="a" style="left:306px;top:195.5px;overflow:visible;opacity:0.42;" width="16" height="16" viewBox="0 0 16 16"><path d="M2.1 8.2V1.9H9.4Z" fill="none" stroke="#3c3c3c" stroke-width="1" /><path d="M9.4 1.9L14.4 10.5M2.1 8.2Q3.8 10.2 7 10.5" fill="none" stroke="#5a5aff" stroke-width="0.6" /><path d="M7 10.9L10.6 7.4L14.4 10.9" fill="none" stroke="#ee1c1c" stroke-width="1" /><path d="M7 10.9H14.4" fill="none" stroke="#8a1010" stroke-width="1.2" /><path d="M7.2 15.6V11.2M14.4 11.2V15.6" fill="none" stroke="#3c3c3c" stroke-width="1" /></svg>
<svg class="a" style="left:306px;top:215.5px;overflow:visible;opacity:0.42;" width="16" height="16" viewBox="0 0 16 16"><path d="M1.3 1.5V15.1" fill="none" stroke="#5a5aff" stroke-width="0.9" /><rect x="3.5" y="2.4" width="4.7" height="2.7" rx="0.8" fill="none" stroke="#3c3c3c"/><rect x="3.5" y="7.1" width="10.9" height="3" rx="1" fill="none" stroke="#3c3c3c"/><rect x="3.5" y="12.2" width="8.9" height="2.6" rx="0.8" fill="none" stroke="#3c3c3c"/></svg>
<svg class="a" style="left:306px;top:247.5px;overflow:visible;" width="16" height="16" viewBox="0 0 16 16"><path d="M1.1 8.9L12 3.8" fill="none" stroke="#ee1c1c" stroke-width="1" /><path d="M4.1 14L14.7 8.7" fill="none" stroke="#111" stroke-width="1" /><path d="M5.6 7.2L6.8 11.9" fill="none" stroke="#5a5aff" stroke-width="0.8" /></svg>
<svg class="a" style="left:306px;top:267.5px;overflow:visible;" width="16" height="16" viewBox="0 0 16 16"><path d="M1.1 9.1L12 4" fill="none" stroke="#ee1c1c" stroke-width="1" /><path d="M4.1 14.2L14.7 8.7" fill="none" stroke="#111" stroke-width="1" /><circle cx="7.3" cy="12" r="1.1" fill="#ee1c1c"/></svg>
<svg class="a" style="left:306px;top:299.5px;overflow:visible;" width="16" height="16" viewBox="0 0 16 16"><path d="M1.1 2L14.7 9.1" fill="none" stroke="#111" stroke-width="0.9" /><path d="M1.1 14.6L4.4 9.7" fill="none" stroke="#111" stroke-width="0.9" /><path d="M4.4 9.7L6.8 5.5" fill="none" stroke="#ee1c1c" stroke-width="1.1" /><path d="M5.5 13.6L9.2 8.7" fill="none" stroke="#5a5aff" stroke-width="1.6" stroke-dasharray="1.4 0.8"/></svg>
<svg class="a" style="left:306px;top:319.5px;overflow:visible;" width="16" height="16" viewBox="0 0 16 16"><path d="M2.1 2.7L8.2 5.1" fill="none" stroke="#111" stroke-width="0.9" /><path d="M8.2 5.1L14.4 6.8L9.4 10" fill="none" stroke="#ee1c1c" stroke-width="1.1" /><path d="M9.4 10L2.1 15.1" fill="none" stroke="#111" stroke-width="0.9" /><path d="M7.6 2.1L13.4 3.9M7.6 13.4L13.4 10.8" fill="none" stroke="#5a5aff" stroke-width="1.6" stroke-dasharray="1.4 0.8"/></svg>
<svg class="a" style="left:306px;top:339.5px;overflow:visible;" width="16" height="16" viewBox="0 0 16 16"><path d="M2.2 14.1L6.1 8.7" fill="none" stroke="#ee1c1c" stroke-width="1.1" /><path d="M6.1 8.7L10.8 2.3" fill="none" stroke="#111" stroke-width="0.9" /><path d="M7.5 12.3L11.3 8.4" fill="none" stroke="#5a5aff" stroke-width="1.6" stroke-dasharray="1.4 0.8"/><circle cx="13.2" cy="11.3" r="0.7" fill="#222"/></svg>
<svg class="a" style="left:306px;top:359.5px;overflow:visible;" width="16" height="16" viewBox="0 0 16 16"><path d="M8.2 3.6H1.4V10Q1.6 13.4 5.4 13.6H8.2M4.7 7.2H8.2M4.7 7.2V10" fill="none" stroke="#111" stroke-width="0.9" /><path d="M8.2 3.6H13.6V13.6H8.2ZM8.2 7.2H13.6M8.2 10H13.6" fill="none" stroke="#ee1c1c" stroke-width="1" /><path d="M5.4 11.4H12.3" fill="none" stroke="#5a5aff" stroke-width="1.3" stroke-dasharray="1.5 0.7"/></svg>
<svg class="a" style="left:306px;top:379.5px;overflow:visible;opacity:0.42;" width="16" height="16" viewBox="0 0 16 16"><path d="M0.5 7L15 12.6M7.8 0.5L14.6 12M0.8 12.2L12 3M3 14.5L15.2 8.5" fill="none" stroke="#ff6a6a" stroke-width="0.6" /><rect x="4" y="5" width="7.8" height="7.1" fill="none" stroke="#5a5aff" stroke-width="1"/><path d="M5.6 11V8.6Q5.8 7.2 7.4 7.2H9.6V11" fill="none" stroke="#3c3c3c" stroke-width="0.8" /></svg>
<svg class="a" style="left:306px;top:411.5px;overflow:visible;" width="16" height="16" viewBox="0 0 16 16"><path d="M1.8 3.8H7.5" fill="none" stroke="#111" stroke-width="0.9" /><path d="M7.5 3.8L12.5 9.9" fill="none" stroke="#ee1c1c" stroke-width="1.1" /><path d="M12.5 9.9V14.2" fill="none" stroke="#111" stroke-width="0.9" /></svg>
<svg class="a" style="left:306px;top:431.5px;overflow:visible;" width="16" height="16" viewBox="0 0 16 16"><path d="M1.8 3.7H7.5" fill="none" stroke="#111" stroke-width="0.9" /><path d="M7.5 3.7Q12.3 3.9 12.5 8.4" fill="none" stroke="#ee1c1c" stroke-width="1.1" /><path d="M12.5 8.4V14.1" fill="none" stroke="#111" stroke-width="0.9" /><circle cx="7.5" cy="8.9" r="0.7" fill="#5a5aff"/></svg>
<svg class="a" style="left:306px;top:463.5px;overflow:visible;" width="16" height="16" viewBox="0 0 16 16"><path d="M0.4 13L9.4 0.9" fill="none" stroke="#111" stroke-width="0.8" /><path d="M4.7 6.4L11.2 8.4M7.6 4.8L8.8 11" fill="none" stroke="#3c3c3c" stroke-width="0.9" /><ellipse cx="13.1" cy="8.3" rx="2.1" ry="1.5" fill="none" stroke="#d01010" stroke-width="1.1" transform="rotate(-15 13.1 8.3)"/><ellipse cx="9.4" cy="13" rx="1.4" ry="2.2" fill="none" stroke="#d01010" stroke-width="1.1"/><circle cx="6.5" cy="4.7" r="1.1" fill="#ee1c1c"/></svg>
<svg class="a" style="left:306px;top:483.5px;overflow:visible;opacity:0.42;" width="16" height="16" viewBox="0 0 16 16"><path d="M0.4 13L9.4 0.9" fill="none" stroke="#111" stroke-width="0.8" /><path d="M4.7 6.4L11.2 8.4M7.6 4.8L8.8 11" fill="none" stroke="#3c3c3c" stroke-width="0.9" /><ellipse cx="13.1" cy="8.3" rx="2.1" ry="1.5" fill="none" stroke="#d01010" stroke-width="1.1" transform="rotate(-15 13.1 8.3)"/><ellipse cx="9.4" cy="13" rx="1.4" ry="2.2" fill="none" stroke="#d01010" stroke-width="1.1"/><circle cx="6.9" cy="4.2" r="1" fill="#ee1c1c"/><circle cx="3.4" cy="8.8" r="1" fill="#ee1c1c"/></svg>
<svg class="a" style="left:306px;top:503.5px;overflow:visible;" width="16" height="16" viewBox="0 0 16 16"><path d="M0.8 8.1H15M4.4 2.8V13.5M11.3 2.8V13.5" fill="none" stroke="#111" stroke-width="0.9" /><circle cx="4.4" cy="8.1" r="1.2" fill="#ee1c1c"/><circle cx="11.3" cy="8.1" r="1.2" fill="#ee1c1c"/></svg>
<svg class="a" style="left:306px;top:523.5px;overflow:visible;" width="16" height="16" viewBox="0 0 16 16"><path d="M3.2 2.5V13.8" fill="none" stroke="#111" stroke-width="0.8" stroke-dasharray="2.6 1.2"/><path d="M9.4 2.5V13.8" fill="none" stroke="#111" stroke-width="0.9" /><path d="M3.2 6.3H9.4M3.2 9.9H9.4" fill="none" stroke="#c8c8c8" stroke-width="0.9" /><path d="M9.4 6.3H13.9M9.4 9.9H13.9" fill="none" stroke="#111" stroke-width="0.9" /><circle cx="9.4" cy="6.3" r="1.2" fill="#ee1c1c"/><circle cx="9.4" cy="9.9" r="1.2" fill="#ee1c1c"/></svg>
<svg class="a" style="left:306px;top:543.5px;overflow:visible;" width="16" height="16" viewBox="0 0 16 16"><path d="M0.8 8.3H4.4M11.3 8.3H15" fill="none" stroke="#5a5aff" stroke-width="0.9" /><path d="M4.4 8.3H11.3M4.4 2.9V13.7M11.3 2.9V13.7" fill="none" stroke="#111" stroke-width="0.9" /><circle cx="4.4" cy="8.3" r="1.2" fill="#ee1c1c"/><circle cx="11.3" cy="8.3" r="1.2" fill="#ee1c1c"/></svg>
<svg class="a" style="left:306px;top:563.5px;overflow:visible;" width="16" height="16" viewBox="0 0 16 16"><path d="M1.8 13.9L14.6 2.1" fill="none" stroke="#111" stroke-width="0.8" /><circle cx="7.8" cy="8.5" r="1.2" fill="#ee1c1c"/></svg>
<svg class="a" style="left:306px;top:595.5px;overflow:visible;opacity:0.7;" width="16" height="16" viewBox="0 0 16 16"><path d="M2.5 11.4Q4.5 4.2 13.2 5.6" fill="none" stroke="#5a5aff" stroke-width="0.9" /><path d="M11.2 3.9L13.6 5.6L11.4 7.2M1.6 9.4L2.5 11.6L4.3 10.2" fill="none" stroke="#5a5aff" stroke-width="0.8" /><path d="M4 13.7L14 8.7" fill="none" stroke="#3c3c3c" stroke-width="0.8" /></svg>
<svg class="a" style="left:306px;top:627.5px;overflow:visible;" width="16" height="16" viewBox="0 0 16 16"><rect x="0.9" y="4.8" width="13.9" height="8.2" fill="#fff" stroke="#222" stroke-width="0.9"/><text x="2.4" y="11.8" font-family="Liberation Serif,serif" font-size="8.5" fill="#111">A</text><path d="M9.1 5.2V12.6" fill="none" stroke="#222" stroke-width="0.8" /></svg>
<svg class="a" style="left:306px;top:647.5px;overflow:visible;" width="16" height="16" viewBox="0 0 16 16"><rect x="0.4" y="4.2" width="15" height="9" rx="1" fill="#f2f2f2" stroke="#555" stroke-width="0.9"/><path d="M8.6 4.2V13.2" fill="none" stroke="#555" stroke-width="0.9" /><circle cx="4.4" cy="8.9" r="1.7" fill="#222"/><path d="M1.6 8.9H7.4M4.4 6V11.8" fill="none" stroke="#222" stroke-width="0.8" /><rect x="10.2" y="10.6" width="1" height="1" fill="#222"/><path d="M12.8 7.4V11.8" fill="none" stroke="#222" stroke-width="0.9" /><path d="M6.6 8.4L12.2 2.6" fill="none" stroke="#e8a020" stroke-width="2.2" /><path d="M12 2.8L13.4 1.4" fill="none" stroke="#e02020" stroke-width="2.2" /><path d="M6 9L7 8" fill="none" stroke="#3a2a10" stroke-width="1.4" /></svg>
<svg class="a" style="left:306px;top:667.5px;overflow:visible;" width="16" height="16" viewBox="0 0 16 16"><path d="M1.4 14.8V10.5L4 7.9H14V14.8Z" fill="#c6c6c6" stroke="#555" stroke-width="0.9"/><circle cx="8.9" cy="11.3" r="1.7" fill="#f4f4f4" stroke="#222" stroke-width="0.9"/><path d="M8.4 7.4L12.8 3.4" fill="none" stroke="#e8a020" stroke-width="2.2" /><path d="M12.6 3.6L14 2.3" fill="none" stroke="#e02020" stroke-width="2.2" /><path d="M7.8 8L8.7 7.2" fill="none" stroke="#3a2a10" stroke-width="1.4" /></svg>
<svg class="a" style="left:306px;top:699.5px;overflow:visible;opacity:0.62;" width="16" height="16" viewBox="0 0 16 16"><path d="M10.7 4.8L13.3 13" fill="none" stroke="#d23a3a" stroke-width="4.2" stroke-linecap="round"/><path d="M4 5.4Q7 1.6 10 4" fill="none" stroke="#3c3c3c" stroke-width="0.8" /><path d="M3.2 3.4L4 5L5.8 5.2L4.5 6.4L4.9 8.2L3.2 7.3L1.6 8.2L2 6.4L0.7 5.2L2.5 5Z" fill="#f2d020"/></svg>
<svg class="a" style="left:306px;top:827.5px;overflow:visible;opacity:0.62;" width="16" height="16" viewBox="0 0 16 16"><rect x="1.8" y="1.6" width="11.6" height="4" rx="1.2" fill="#f0cf3a"/><path d="M13.4 3.6H15V7.4H7.8V9.4" fill="none" stroke="#3c3c3c" stroke-width="0.8" /><rect x="6.6" y="9.2" width="2.4" height="7" rx="1" fill="#e04a4a"/></svg>
</div></body></html>
